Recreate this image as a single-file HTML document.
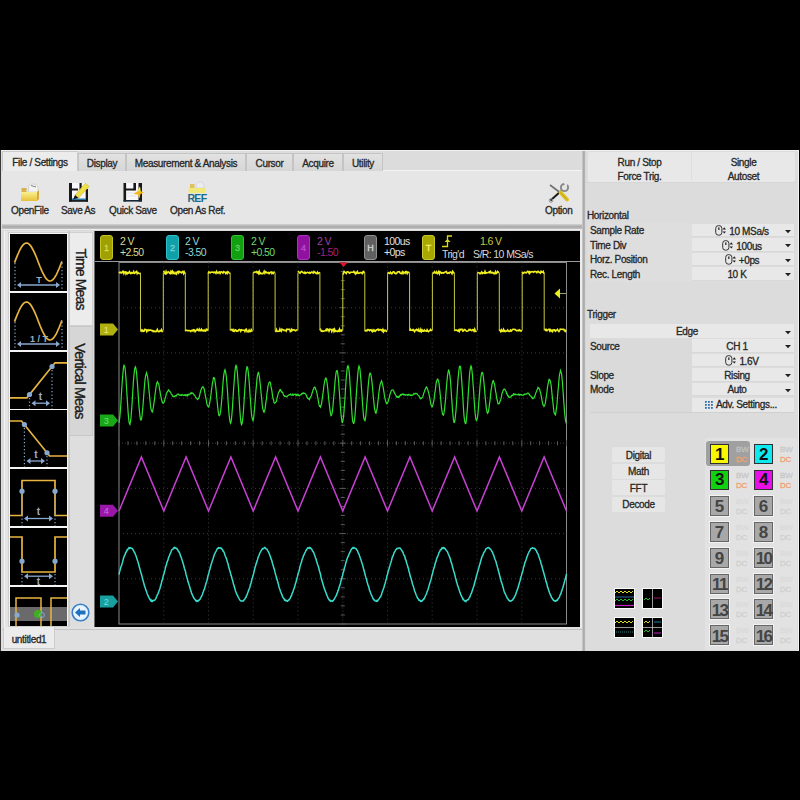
<!DOCTYPE html>
<html><head><meta charset="utf-8">
<style>
*{margin:0;padding:0;box-sizing:border-box}
html,body{width:800px;height:800px;background:#000;overflow:hidden}
body{position:relative;font-family:"Liberation Sans",sans-serif;font-size:10px;letter-spacing:-0.35px;color:#262626;-webkit-text-stroke:0.3px currentColor}
.a{position:absolute}
.t{position:absolute;white-space:nowrap;line-height:12px;padding-top:1px}
#app{position:absolute;left:1px;top:150px;width:798px;height:501px;background:#dedede;border-top:1px solid #f0f0f0}
.tab{position:absolute;top:153px;height:18px;padding-top:1px;background:linear-gradient(#e2e2e2,#d6d6d6);border:1px solid #c4c4c4;border-bottom:none;text-align:center;line-height:17px}
.btn{position:absolute;text-align:center;line-height:14px}
.lbl{position:absolute;white-space:nowrap}
</style></head><body>
<div id="app"></div>
<!-- tab strip -->
<div class="a" style="left:2px;top:151px;width:580px;height:20px;background:#dcdcdc"></div>
<div class="a" style="left:2px;top:170px;width:580px;height:1px;background:#f4f4f4"></div>
<div class="tab" style="left:78px;width:48px">Display</div>
<div class="tab" style="left:126px;width:120px">Measurement &amp; Analysis</div>
<div class="tab" style="left:246px;width:47px">Cursor</div>
<div class="tab" style="left:293px;width:50px">Acquire</div>
<div class="tab" style="left:343px;width:40px">Utility</div>
<div class="a" style="left:2px;top:151px;width:76px;height:21px;background:#ececec;border:1px solid #cacaca;border-bottom:none"></div>
<div class="t" style="left:2px;top:156px;width:76px;text-align:center">File / Settings</div>
<!-- toolbar -->
<div class="a" style="left:2px;top:171px;width:580px;height:54px;background:#e6e6e6"></div>
<div class="a" style="left:2px;top:224px;width:580px;height:5px;background:linear-gradient(#d4d4d4,#a8a8a8 55%,#c4c4c4)"></div>
<div class="a" style="left:2px;top:229px;width:580px;height:1px;background:#ececec"></div>
<div class="t" style="left:11px;top:204px">OpenFile</div>
<div class="t" style="left:61px;top:204px">Save As</div>
<div class="t" style="left:109px;top:204px">Quick Save</div>
<div class="t" style="left:170px;top:204px">Open As Ref.</div>
<div class="t" style="left:545px;top:204px">Option</div>
<svg class="a" style="left:16px;top:178px" width="30" height="28" viewBox="0 0 30 28">
<defs><linearGradient id="fg" x1="0" y1="0" x2="0" y2="1"><stop offset="0" stop-color="#f8f090"/><stop offset="1" stop-color="#e8c038"/></linearGradient></defs>
<rect x="5.5" y="10" width="5" height="4" fill="#d8b048"/>
<path d="M12.5,8 Q14,5.5 18,6 Q21,6.5 22,9 V14 H12.5 Z" fill="#f4f4f4" stroke="#c8c8c8" stroke-width="0.7"/>
<path d="M15,7.5 L20,9" stroke="#808080" stroke-width="1"/>
<rect x="5" y="14" width="16" height="9" fill="url(#fg)"/>
<path d="M21,14 L23,12 V21 L21,23 Z" fill="#d8a840"/>
</svg>
<svg class="a" style="left:64px;top:178px" width="30" height="28" viewBox="0 0 30 28">
<rect x="6" y="5" width="17" height="18" fill="#f8f8fc"/>
<rect x="5" y="5" width="3" height="18.5" fill="#181818"/>
<rect x="8" y="10.5" width="6" height="2" fill="#181818"/>
<rect x="15.5" y="5" width="2.2" height="7" fill="#181818"/>
<rect x="21.7" y="11" width="2.3" height="12.5" fill="#181818"/>
<rect x="5" y="22" width="19" height="1.8" fill="#181818"/>
<rect x="8" y="20.5" width="14" height="1.6" fill="#2878a8"/>
<path d="M11,17 L21.5,5 L25,8.5 L14.5,20 Z" fill="#f0e048" stroke="#c8b030" stroke-width="0.6"/>
<path d="M11,17 L9,21.5 L14.5,20 Z" fill="#181818"/>
</svg>
<svg class="a" style="left:118px;top:178px" width="30" height="28" viewBox="0 0 30 28">
<rect x="6" y="5" width="18" height="18" fill="#f8f8fc"/>
<rect x="5.5" y="5" width="2.6" height="18.5" fill="#181818"/>
<rect x="8" y="10.5" width="8" height="2" fill="#181818"/>
<rect x="15.4" y="5" width="2.6" height="7.5" fill="#181818"/>
<rect x="20.5" y="5" width="3.5" height="18.5" fill="#181818"/>
<rect x="5.5" y="22" width="18.5" height="1.6" fill="#182838"/>
<path d="M9,15 H18 M9,18 H18" stroke="#e0e0f0" stroke-width="1"/>
<path d="M22,8.5 L22.5,13 L26,14.5 L22.5,16 L21.5,20.5 L19.5,16.5 L15.5,16 L19,13.5 Z" fill="#f4b820"/>
<path d="M22,8.5 L22.5,13 L19,13.5 Z" fill="#d8f060"/>
</svg>
<svg class="a" style="left:182px;top:176px" width="30" height="30" viewBox="0 0 30 30">
<rect x="8" y="8" width="4.5" height="4.5" fill="#e0c060"/>
<path d="M14,9 Q16,5 20,6 L22,9 V12 H14 Z" fill="#ececf4" stroke="#c8c8d0" stroke-width="0.6"/>
<rect x="6.5" y="12" width="17" height="5" fill="#f0e878"/>
<text x="15" y="26.3" font-size="10.5" font-weight="bold" fill="#1d6a88" text-anchor="middle" font-family="Liberation Sans" letter-spacing="-0.6">REF</text>
</svg>
<svg class="a" style="left:544px;top:178px" width="30" height="28" viewBox="0 0 30 28">
<path d="M6,7 L16,14.5" stroke="#707070" stroke-width="1.6"/>
<path d="M6.5,22.5 L17,13" stroke="#1a1a1a" stroke-width="2"/>
<circle cx="7" cy="22.5" r="1.8" fill="none" stroke="#909090" stroke-width="1"/>
<path d="M16.5,14.5 L23,21.5" stroke="#e0c020" stroke-width="4" stroke-linecap="round"/>
<path d="M16.5,14.5 L23,21.5" stroke="#a09020" stroke-width="0.6"/>
<circle cx="20.5" cy="9.5" r="3.6" fill="none" stroke="#8a8a8a" stroke-width="2"/>
<path d="M20,5 L24,5 L22,10 Z" fill="#e6e6e6"/>
</svg>
<!-- left content bg -->
<div class="a" style="left:2px;top:230px;width:580px;height:398px;background:#dadada"></div>
<svg width="486" height="396" viewBox="0 0 486 396" style="position:absolute;left:94px;top:231px">
<rect width="486" height="396" fill="#000"/>
<style>.gd{stroke:#3a3a3a;stroke-width:1;stroke-dasharray:1 3} .gc{stroke:#3a3a3a;stroke-width:1;stroke-dasharray:1 2} .gt{stroke:#5a5a5a;stroke-width:1}</style>
<line x1="0" y1="30.5" x2="486" y2="30.5" stroke="#9a9a9a" stroke-width="1"/><line x1="0.5" y1="0" x2="0.5" y2="396" stroke="#6a6a6a" stroke-width="1"/>
<rect x="25" y="31.5" width="447.5" height="361.5" fill="none" stroke="#8a8a8a" stroke-width="1"/>
<line x1="69.8" y1="31.5" x2="69.8" y2="393" class="gd"/>
<line x1="114.5" y1="31.5" x2="114.5" y2="393" class="gd"/>
<line x1="159.2" y1="31.5" x2="159.2" y2="393" class="gd"/>
<line x1="204" y1="31.5" x2="204" y2="393" class="gd"/>
<line x1="293.5" y1="31.5" x2="293.5" y2="393" class="gd"/>
<line x1="338.2" y1="31.5" x2="338.2" y2="393" class="gd"/>
<line x1="383" y1="31.5" x2="383" y2="393" class="gd"/>
<line x1="427.8" y1="31.5" x2="427.8" y2="393" class="gd"/>
<line x1="25" y1="76.7" x2="472.5" y2="76.7" class="gd"/>
<line x1="25" y1="121.9" x2="472.5" y2="121.9" class="gd"/>
<line x1="25" y1="167.1" x2="472.5" y2="167.1" class="gd"/>
<line x1="25" y1="257.4" x2="472.5" y2="257.4" class="gd"/>
<line x1="25" y1="302.6" x2="472.5" y2="302.6" class="gd"/>
<line x1="25" y1="347.8" x2="472.5" y2="347.8" class="gd"/>
<line x1="248.8" y1="31.5" x2="248.8" y2="393" class="gc"/>
<line x1="25" y1="212.2" x2="472.5" y2="212.2" class="gc"/>
<line x1="25" y1="209.2" x2="25" y2="215.2" class="gt"/>
<line x1="34" y1="210.2" x2="34" y2="214.2" class="gt"/>
<line x1="42.9" y1="210.2" x2="42.9" y2="214.2" class="gt"/>
<line x1="51.8" y1="210.2" x2="51.8" y2="214.2" class="gt"/>
<line x1="60.8" y1="210.2" x2="60.8" y2="214.2" class="gt"/>
<line x1="69.8" y1="209.2" x2="69.8" y2="215.2" class="gt"/>
<line x1="78.7" y1="210.2" x2="78.7" y2="214.2" class="gt"/>
<line x1="87.7" y1="210.2" x2="87.7" y2="214.2" class="gt"/>
<line x1="96.6" y1="210.2" x2="96.6" y2="214.2" class="gt"/>
<line x1="105.6" y1="210.2" x2="105.6" y2="214.2" class="gt"/>
<line x1="114.5" y1="209.2" x2="114.5" y2="215.2" class="gt"/>
<line x1="123.4" y1="210.2" x2="123.4" y2="214.2" class="gt"/>
<line x1="132.4" y1="210.2" x2="132.4" y2="214.2" class="gt"/>
<line x1="141.3" y1="210.2" x2="141.3" y2="214.2" class="gt"/>
<line x1="150.3" y1="210.2" x2="150.3" y2="214.2" class="gt"/>
<line x1="159.2" y1="209.2" x2="159.2" y2="215.2" class="gt"/>
<line x1="168.2" y1="210.2" x2="168.2" y2="214.2" class="gt"/>
<line x1="177.1" y1="210.2" x2="177.1" y2="214.2" class="gt"/>
<line x1="186.1" y1="210.2" x2="186.1" y2="214.2" class="gt"/>
<line x1="195.1" y1="210.2" x2="195.1" y2="214.2" class="gt"/>
<line x1="204" y1="209.2" x2="204" y2="215.2" class="gt"/>
<line x1="212.9" y1="210.2" x2="212.9" y2="214.2" class="gt"/>
<line x1="221.9" y1="210.2" x2="221.9" y2="214.2" class="gt"/>
<line x1="230.9" y1="210.2" x2="230.9" y2="214.2" class="gt"/>
<line x1="239.8" y1="210.2" x2="239.8" y2="214.2" class="gt"/>
<line x1="248.8" y1="209.2" x2="248.8" y2="215.2" class="gt"/>
<line x1="257.7" y1="210.2" x2="257.7" y2="214.2" class="gt"/>
<line x1="266.6" y1="210.2" x2="266.6" y2="214.2" class="gt"/>
<line x1="275.6" y1="210.2" x2="275.6" y2="214.2" class="gt"/>
<line x1="284.6" y1="210.2" x2="284.6" y2="214.2" class="gt"/>
<line x1="293.5" y1="209.2" x2="293.5" y2="215.2" class="gt"/>
<line x1="302.4" y1="210.2" x2="302.4" y2="214.2" class="gt"/>
<line x1="311.4" y1="210.2" x2="311.4" y2="214.2" class="gt"/>
<line x1="320.4" y1="210.2" x2="320.4" y2="214.2" class="gt"/>
<line x1="329.3" y1="210.2" x2="329.3" y2="214.2" class="gt"/>
<line x1="338.2" y1="209.2" x2="338.2" y2="215.2" class="gt"/>
<line x1="347.2" y1="210.2" x2="347.2" y2="214.2" class="gt"/>
<line x1="356.1" y1="210.2" x2="356.1" y2="214.2" class="gt"/>
<line x1="365.1" y1="210.2" x2="365.1" y2="214.2" class="gt"/>
<line x1="374.1" y1="210.2" x2="374.1" y2="214.2" class="gt"/>
<line x1="383" y1="209.2" x2="383" y2="215.2" class="gt"/>
<line x1="391.9" y1="210.2" x2="391.9" y2="214.2" class="gt"/>
<line x1="400.9" y1="210.2" x2="400.9" y2="214.2" class="gt"/>
<line x1="409.9" y1="210.2" x2="409.9" y2="214.2" class="gt"/>
<line x1="418.8" y1="210.2" x2="418.8" y2="214.2" class="gt"/>
<line x1="427.8" y1="209.2" x2="427.8" y2="215.2" class="gt"/>
<line x1="436.7" y1="210.2" x2="436.7" y2="214.2" class="gt"/>
<line x1="445.6" y1="210.2" x2="445.6" y2="214.2" class="gt"/>
<line x1="454.6" y1="210.2" x2="454.6" y2="214.2" class="gt"/>
<line x1="463.5" y1="210.2" x2="463.5" y2="214.2" class="gt"/>
<line x1="472.5" y1="209.2" x2="472.5" y2="215.2" class="gt"/>
<line x1="245.8" y1="31.5" x2="251.8" y2="31.5" class="gt"/>
<line x1="246.8" y1="40.5" x2="250.8" y2="40.5" class="gt"/>
<line x1="246.8" y1="49.6" x2="250.8" y2="49.6" class="gt"/>
<line x1="246.8" y1="58.6" x2="250.8" y2="58.6" class="gt"/>
<line x1="246.8" y1="67.6" x2="250.8" y2="67.6" class="gt"/>
<line x1="245.8" y1="76.7" x2="251.8" y2="76.7" class="gt"/>
<line x1="246.8" y1="85.7" x2="250.8" y2="85.7" class="gt"/>
<line x1="246.8" y1="94.8" x2="250.8" y2="94.8" class="gt"/>
<line x1="246.8" y1="103.8" x2="250.8" y2="103.8" class="gt"/>
<line x1="246.8" y1="112.8" x2="250.8" y2="112.8" class="gt"/>
<line x1="245.8" y1="121.9" x2="251.8" y2="121.9" class="gt"/>
<line x1="246.8" y1="130.9" x2="250.8" y2="130.9" class="gt"/>
<line x1="246.8" y1="139.9" x2="250.8" y2="139.9" class="gt"/>
<line x1="246.8" y1="149" x2="250.8" y2="149" class="gt"/>
<line x1="246.8" y1="158" x2="250.8" y2="158" class="gt"/>
<line x1="245.8" y1="167.1" x2="251.8" y2="167.1" class="gt"/>
<line x1="246.8" y1="176.1" x2="250.8" y2="176.1" class="gt"/>
<line x1="246.8" y1="185.1" x2="250.8" y2="185.1" class="gt"/>
<line x1="246.8" y1="194.2" x2="250.8" y2="194.2" class="gt"/>
<line x1="246.8" y1="203.2" x2="250.8" y2="203.2" class="gt"/>
<line x1="245.8" y1="212.2" x2="251.8" y2="212.2" class="gt"/>
<line x1="246.8" y1="221.3" x2="250.8" y2="221.3" class="gt"/>
<line x1="246.8" y1="230.3" x2="250.8" y2="230.3" class="gt"/>
<line x1="246.8" y1="239.4" x2="250.8" y2="239.4" class="gt"/>
<line x1="246.8" y1="248.4" x2="250.8" y2="248.4" class="gt"/>
<line x1="245.8" y1="257.4" x2="251.8" y2="257.4" class="gt"/>
<line x1="246.8" y1="266.5" x2="250.8" y2="266.5" class="gt"/>
<line x1="246.8" y1="275.5" x2="250.8" y2="275.5" class="gt"/>
<line x1="246.8" y1="284.5" x2="250.8" y2="284.5" class="gt"/>
<line x1="246.8" y1="293.6" x2="250.8" y2="293.6" class="gt"/>
<line x1="245.8" y1="302.6" x2="251.8" y2="302.6" class="gt"/>
<line x1="246.8" y1="311.7" x2="250.8" y2="311.7" class="gt"/>
<line x1="246.8" y1="320.7" x2="250.8" y2="320.7" class="gt"/>
<line x1="246.8" y1="329.7" x2="250.8" y2="329.7" class="gt"/>
<line x1="246.8" y1="338.8" x2="250.8" y2="338.8" class="gt"/>
<line x1="245.8" y1="347.8" x2="251.8" y2="347.8" class="gt"/>
<line x1="246.8" y1="356.8" x2="250.8" y2="356.8" class="gt"/>
<line x1="246.8" y1="365.9" x2="250.8" y2="365.9" class="gt"/>
<line x1="246.8" y1="374.9" x2="250.8" y2="374.9" class="gt"/>
<line x1="246.8" y1="384" x2="250.8" y2="384" class="gt"/>
<line x1="245.8" y1="393" x2="251.8" y2="393" class="gt"/>
<path d="M25,40.9 L25.7,41.7 L26.4,41.3 L27.1,41.9 L27.8,41.9 L28.5,40.5 L29.2,40.3 L29.9,42.5 L30.6,41 L31.3,40.9 L32,42.9 L32.7,41.5 L33.4,42.5 L34.1,41.5 L34.8,42 L35.5,40.7 L36.2,42 L36.9,42.6 L37.6,41.7 L38.3,42.2 L39,42 L39.7,40.5 L40.4,42.3 L41.1,41.8 L41.8,41.1 L42.5,40.4 L43.2,42.6 L43.9,41.5 L44.6,42.2 L45.3,42.6 L46,42.2 M46.5,100.5 L47.2,99.1 L47.9,100.2 L48.6,99.3 L49.3,100.5 L50,100.4 L50.7,98.4 L51.4,98.5 L52.1,98.7 L52.8,100.6 L53.5,99.2 L54.2,99.7 L54.9,98.9 L55.6,99.4 L56.3,99.1 L57,99 L57.7,99.6 L58.4,99.6 L59.1,100.5 L59.8,99.9 L60.5,100.5 L61.2,100.3 L61.9,100.7 L62.6,99.8 L63.3,98.5 L64,100.3 L64.7,100.6 L65.4,100.5 L66.1,99.6 L66.8,100 L67.5,98.6 L68.2,100.3 L68.9,99.6 M69.3,41 L70,40.5 L70.7,42.5 L71.4,42.9 L72.1,40.5 L72.8,42.4 L73.5,41.4 L74.2,40.7 L74.9,41.1 L75.6,42.3 L76.3,42.6 L77,40.4 L77.7,41.9 L78.4,40.4 L79.1,42.2 L79.8,41.2 L80.5,42.6 L81.2,42.8 L81.9,41.6 L82.6,42.9 L83.3,41.1 L84,40.5 L84.7,41.9 L85.4,40.4 L86.1,40.8 L86.8,41.4 L87.5,41.9 L88.2,40.7 L88.9,40.4 L89.6,42.6 L90.3,41.1 L91,42.8 M91.3,100.4 L92,99.1 L92.7,99.3 L93.4,99.5 L94.1,99.8 L94.8,99.6 L95.5,99.6 L96.2,99.7 L96.9,100.5 L97.6,99.4 L98.3,99.2 L99,100 L99.7,98.7 L100.4,98.9 L101.1,100.6 L101.8,99.5 L102.5,99.5 L103.2,98.1 L103.9,99.2 L104.6,99.6 L105.3,98.2 L106,99.7 L106.7,99.7 L107.4,98.3 L108.1,99.7 L108.8,99.3 L109.5,99.9 L110.2,99 L110.9,99.9 L111.6,100 L112.3,98.2 L113,98.3 L113.7,99.9 M114.2,42.8 L114.9,41 L115.6,41.5 L116.3,41.8 L117,41.1 L117.7,41.2 L118.4,41.1 L119.1,41.3 L119.8,41.8 L120.5,41.1 L121.2,41.3 L121.9,42.3 L122.6,40.4 L123.3,41.8 L124,42.2 L124.7,41.1 L125.4,40.9 L126.1,42.4 L126.8,40.9 L127.5,40.8 L128.2,41.4 L128.9,42.1 L129.6,40.6 L130.3,41.1 L131,41.2 L131.7,42.5 L132.4,41.4 L133.1,42.5 L133.8,40.7 L134.5,41.2 L135.2,42 L135.9,42.6 M136.2,99.3 L136.9,98.7 L137.6,98.4 L138.3,99.5 L139,98.6 L139.7,100.2 L140.4,100.3 L141.1,98.6 L141.8,98.8 L142.5,100.2 L143.2,99.8 L143.9,100.2 L144.6,99 L145.3,98.4 L146,98.9 L146.7,100.2 L147.4,98.8 L148.1,99 L148.8,99.2 L149.5,99.2 L150.2,99.2 L150.9,100.5 L151.6,98.5 L152.3,98.1 L153,100.6 L153.7,100.4 L154.4,100.7 L155.1,99.2 L155.8,100.6 L156.5,100.5 L157.2,98.7 L157.9,100 L158.6,100.3 M159.1,42 L159.8,41.6 L160.4,41.1 L161.1,41.2 L161.8,40.9 L162.5,40.5 L163.2,41.8 L163.9,41 L164.6,42.4 L165.3,40.4 L166,42.6 L166.7,42.1 L167.4,42.7 L168.1,42.6 L168.8,42.6 L169.5,41.8 L170.2,40.3 L170.9,42.2 L171.6,40.7 L172.3,41.1 L173,42 L173.7,41.7 L174.4,41.4 L175.1,42.7 L175.8,41.9 L176.5,41.2 L177.2,41 L177.9,42.5 L178.6,41.5 L179.3,42.3 L180,41.2 L180.7,40.8 M181.1,99.5 L181.8,100.2 L182.4,98.5 L183.1,100.2 L183.8,100.5 L184.5,100.2 L185.2,100.2 L185.9,98.1 L186.6,99.7 L187.3,100.3 L188,98.2 L188.7,98.8 L189.4,98.8 L190.1,99.5 L190.8,99.2 L191.5,99.3 L192.2,100.1 L192.9,98.1 L193.6,98.2 L194.3,98.4 L195,98.4 L195.7,98.3 L196.4,100.6 L197.1,100.3 L197.8,98.3 L198.5,99.4 L199.2,98.9 L199.9,98.9 L200.6,99 L201.3,99.8 L202,99.6 L202.7,99 L203.4,98.6 M203.9,41.2 L204.6,40.6 L205.3,41.7 L206,42.2 L206.7,41.3 L207.4,40.5 L208.1,40.8 L208.8,41.3 L209.5,41.9 L210.2,42.3 L210.9,41.3 L211.6,42.4 L212.3,41.9 L213,41.4 L213.7,41.3 L214.4,41.6 L215.1,42.1 L215.8,41.4 L216.5,42.1 L217.2,41.5 L217.9,40.9 L218.6,41.7 L219.3,42.1 L220,40.5 L220.7,41.4 L221.4,41.4 L222.1,42.6 L222.8,42.7 L223.5,41.3 L224.2,42.6 L224.9,42.4 L225.6,41 M225.9,99.3 L226.6,98.4 L227.3,100.2 L228,99.8 L228.7,100.4 L229.4,100.2 L230.1,99.8 L230.8,100 L231.5,99.6 L232.2,98.4 L232.9,99.6 L233.6,98.1 L234.3,98.5 L235,100.1 L235.7,98.2 L236.4,98.3 L237.1,98.4 L237.8,100.4 L238.5,98.6 L239.2,98.2 L239.9,100.3 L240.6,98.4 L241.3,100.3 L242,99.9 L242.7,100.3 L243.4,100.6 L244.1,99.6 L244.8,100.2 L245.5,98.2 L246.2,100.1 L246.9,99.4 L247.6,100 L248.3,98.4 M248.8,42.2 L249.4,42.7 L250.1,40.5 L250.8,41.1 L251.5,41.8 L252.2,42.5 L252.9,40.9 L253.6,40.8 L254.3,40.9 L255,41.9 L255.7,42.3 L256.4,41.3 L257.1,41.3 L257.8,41.3 L258.5,41.2 L259.2,41.4 L259.9,40.5 L260.6,41.6 L261.3,42.8 L262,41.4 L262.7,42.2 L263.4,40.7 L264.1,42.1 L264.8,42.3 L265.5,42.1 L266.2,41.6 L266.9,41.6 L267.6,42 L268.3,42.6 L269,40.7 L269.7,40.5 L270.4,42.2 M270.8,100.5 L271.4,99.4 L272.1,99.3 L272.8,100 L273.5,98.6 L274.2,98.8 L274.9,98.6 L275.6,99.6 L276.3,98.9 L277,98.7 L277.7,99.9 L278.4,100.6 L279.1,98.9 L279.8,99.9 L280.5,99.2 L281.2,100.3 L281.9,99.6 L282.6,98.8 L283.3,98.7 L284,98.2 L284.7,99.3 L285.4,99.1 L286.1,98.5 L286.8,99 L287.5,98.9 L288.2,100.1 L288.9,98.5 L289.6,100.7 L290.3,99.3 L291,99.7 L291.7,99.3 L292.4,100.3 L293.1,100.2 M293.6,41.7 L294.3,41.6 L295,42.2 L295.7,42.5 L296.4,41.3 L297.1,42.2 L297.8,42.8 L298.5,41.5 L299.2,40.9 L299.9,40.9 L300.6,42.2 L301.3,42.1 L302,42.8 L302.7,42.5 L303.4,40.9 L304.1,40.8 L304.8,41 L305.5,40.8 L306.2,42.1 L306.9,42.5 L307.6,42.6 L308.3,41 L309,42.5 L309.7,41.1 L310.4,41.4 L311.1,42.2 L311.8,40.5 L312.5,40.5 L313.2,42.5 L313.9,41.1 L314.6,41.2 L315.3,41.8 M315.6,99.9 L316.3,98.1 L317,99 L317.7,99.2 L318.4,99.4 L319.1,98.6 L319.8,99.6 L320.5,100.6 L321.2,99.1 L321.9,99.5 L322.6,98.4 L323.3,98.8 L324,99.8 L324.7,98.4 L325.4,100.4 L326.1,100.5 L326.8,98.4 L327.5,100.5 L328.2,99.1 L328.9,100.1 L329.6,100.1 L330.3,98.9 L331,99.9 L331.7,99.8 L332.4,100.2 L333.1,98.8 L333.8,100.1 L334.5,100.6 L335.2,99.8 L335.9,99.5 L336.6,98.4 L337.3,99.4 L338,99 M338.4,42.2 L339.1,42.1 L339.8,41.8 L340.5,40.8 L341.2,42 L341.9,41.9 L342.6,40.8 L343.3,42.6 L344,42 L344.7,40.6 L345.4,42.7 L346.1,40.7 L346.8,41.2 L347.5,42.2 L348.2,41.9 L348.9,41.7 L349.6,42 L350.3,41.5 L351,41.1 L351.7,40.8 L352.4,40.5 L353.1,42.2 L353.8,42.3 L354.5,41.7 L355.2,42.2 L355.9,41.2 L356.6,41 L357.3,41.3 L358,42.6 L358.7,40.4 L359.4,41.6 L360.1,40.9 M360.4,100.1 L361.1,99 L361.8,99 L362.5,99.1 L363.2,99.5 L363.9,100.1 L364.6,99 L365.3,100.3 L366,98.4 L366.7,98.8 L367.4,98.4 L368.1,98.4 L368.8,100.1 L369.5,100 L370.2,98.6 L370.9,98.6 L371.6,99.2 L372.3,100 L373,100.2 L373.7,100 L374.4,99.6 L375.1,98.5 L375.8,99.1 L376.5,98.6 L377.2,99.5 L377.9,99.6 L378.6,98.6 L379.3,98.8 L380,100.1 L380.7,98.2 L381.4,100.2 L382.1,100.4 L382.8,100.6 M383.3,41.3 L384,41.7 L384.7,41.8 L385.4,41.9 L386.1,42.8 L386.8,42.1 L387.5,41.1 L388.2,42.5 L388.9,41.6 L389.6,41.9 L390.3,42.2 L391,40.3 L391.7,42.3 L392.4,42 L393.1,41.6 L393.8,41.7 L394.5,41.5 L395.2,40.8 L395.9,41.7 L396.6,40.4 L397.3,41.6 L398,42 L398.7,41.5 L399.4,41.8 L400.1,42.8 L400.8,42.6 L401.5,40.7 L402.2,42.4 L402.9,41.9 L403.6,40.4 L404.3,41.2 L405,40.9 M405.3,98.3 L406,99.5 L406.7,100.5 L407.4,98.9 L408.1,100.4 L408.8,99.9 L409.5,98.4 L410.2,100.3 L410.9,99.7 L411.6,100.5 L412.3,100 L413,100 L413.7,99 L414.4,100.2 L415.1,100.5 L415.8,100.3 L416.5,99.2 L417.2,100.1 L417.9,99.4 L418.6,98.4 L419.3,98.2 L420,98.3 L420.7,98.6 L421.4,98.5 L422.1,99.4 L422.8,99.9 L423.5,99.5 L424.2,99.2 L424.9,99.8 L425.6,98.9 L426.3,99.3 L427,100.1 L427.7,99.1 M428.2,40.8 L428.9,42.6 L429.6,42.2 L430.3,41.3 L431,41.3 L431.7,41.7 L432.4,41.9 L433.1,40.9 L433.8,40.3 L434.5,40.8 L435.2,42.3 L435.9,40.7 L436.6,41.5 L437.3,40.8 L438,40.8 L438.7,40.7 L439.4,41.3 L440.1,40.7 L440.8,40.4 L441.5,40.6 L442.2,40.7 L442.9,41.6 L443.6,40.5 L444.3,40.4 L445,41.5 L445.7,41.4 L446.4,42.1 L447.1,40.4 L447.8,41.3 L448.5,41.3 L449.2,40.4 L449.9,42.8 M450.2,98.7 L450.9,98.3 L451.6,99.3 L452.3,98.5 L453,99.7 L453.7,99 L454.4,98.4 L455.1,98.2 L455.8,100 L456.5,98.8 L457.2,100.1 L457.9,99.3 L458.6,100.5 L459.3,98.9 L460,98.7 L460.7,98.8 L461.4,100.2 L462.1,99.7 L462.8,99 L463.5,98.3 L464.2,99.9 L464.9,100.6 L465.6,99.6 L466.3,98.1 L467,98.2 L467.7,98.3 L468.4,98.5 L469.1,98.2 L469.8,98.2 L470.5,99.8 L471.2,100.4 L471.9,98.6" fill="none" stroke="#f0f020" stroke-width="1.6"/><path d="M46.5,41.6 L46.5,99.4 M69.3,99.4 L69.3,41.6 M91.3,41.6 L91.3,99.4 M114.2,99.4 L114.2,41.6 M136.2,41.6 L136.2,99.4 M159.1,99.4 L159.1,41.6 M181.1,41.6 L181.1,99.4 M203.9,99.4 L203.9,41.6 M225.9,41.6 L225.9,99.4 M248.8,99.4 L248.8,41.6 M270.8,41.6 L270.8,99.4 M293.6,99.4 L293.6,41.6 M315.6,41.6 L315.6,99.4 M338.4,99.4 L338.4,41.6 M360.4,41.6 L360.4,99.4 M383.3,99.4 L383.3,41.6 M405.3,41.6 L405.3,99.4 M428.2,99.4 L428.2,41.6 M450.2,41.6 L450.2,99.4" fill="none" stroke="#c8c840" stroke-width="1"/>
<path d="M25,191.9 L25.5,188.6 L26,184.4 L26.5,178.3 L27,170.9 L27.5,161.6 L28,154 L28.5,147.1 L29,141.6 L29.5,136.2 L30,134.4 L30.5,135.3 L31,136.8 L31.5,141.7 L32,147.9 L32.5,155.9 L33,164.5 L33.5,171.6 L34,179.9 L34.5,186.1 L35,190.8 L35.5,192.8 L36,193.5 L36.5,190.5 L37,186.4 L37.5,180.1 L38,173.6 L38.5,165.2 L39,157 L39.5,149.4 L40,144 L40.5,139.2 L41,136.8 L41.5,135.9 L42,137.8 L42.5,141.1 L43,147.3 L43.5,153 L44,161 L44.5,168.8 L45,175.6 L45.5,180.7 L46,185.3 L46.5,188.7 L47,189.1 L47.5,188.1 L48,184.9 L48.5,179.6 L49,174.5 L49.5,167.8 L50,160.7 L50.5,154.6 L51,148.9 L51.5,145.4 L52,143.8 L52.5,141.8 L53,143.4 L53.5,145.3 L54,149.1 L54.5,154.6 L55,159.4 L55.5,164.5 L56,169.8 L56.5,174.9 L57,178.1 L57.5,179.4 L58,180.5 L58.5,180.9 L59,178 L59.5,175.5 L60,171.7 L60.5,168.1 L61,163.7 L61.5,160 L62,156.3 L62.5,153.2 L63,151.5 L63.5,150.7 L64,152.2 L64.5,152.5 L65,154.4 L65.5,158.3 L66,160.1 L66.5,164 L67,165.6 L67.5,168.5 L68,170 L68.5,171.9 L69,172.1 L69.5,171.9 L70,171.2 L70.5,170.1 L71,167.7 L71.5,166.3 L72,164.3 L72.5,162.1 L73,161.7 L73.5,160.4 L74,160 L74.5,158.9 L75,159.6 L75.5,159.9 L76,161 L76.5,161 L77,162.3 L77.5,163.4 L78,163.6 L78.5,164.9 L79,165.6 L79.5,165.4 L80,165.8 L80.5,165.6 L81,164.8 L81.5,164.7 L82,165.3 L82.5,164 L83,163.9 L83.5,163.2 L84,163.2 L84.5,163.1 L85,164.1 L85.5,163.9 L86,164.1 L86.5,164.3 L87,163.9 L87.5,164.4 L88,163.8 L88.5,163.7 L89,164.4 L89.5,164.4 L90,164.4 L90.5,163.8 L91,164.3 L91.5,163.8 L92,164.7 L92.5,164.6 L93,163.8 L93.5,164.7 L94,163.5 L94.5,163.2 L95,163.9 L95.5,163 L96,163 L96.5,162.9 L97,161.7 L97.5,162.5 L98,161.8 L98.5,162.1 L99,162.3 L99.5,163.3 L100,164 L100.5,164.1 L101,164.8 L101.5,165.9 L102,166.9 L102.5,167.1 L103,167.6 L103.5,168.5 L104,168.1 L104.5,167.7 L105,166.6 L105.5,165 L106,162.6 L106.5,160.5 L107,159 L107.5,157.7 L108,156.6 L108.5,155.9 L109,155.6 L109.5,156.9 L110,157.4 L110.5,159.6 L111,162.6 L111.5,165.3 L112,167.5 L112.5,170.3 L113,173.5 L113.5,174.2 L114,175.5 L114.5,176.1 L115,175.3 L115.5,172.9 L116,169.9 L116.5,166.6 L117,163.4 L117.5,158.8 L118,155.5 L118.5,151.8 L119,149.4 L119.5,146.5 L120,146.5 L120.5,147.3 L121,150.3 L121.5,153.8 L122,158 L122.5,163.9 L123,168.7 L123.5,174.2 L124,178.6 L124.5,182.9 L125,184.5 L125.5,184.7 L126,183.3 L126.5,181 L127,176.9 L127.5,171.5 L128,165.6 L128.5,158.9 L129,151.8 L129.5,146.1 L130,142.7 L130.5,140 L131,138.8 L131.5,140.4 L132,143.1 L132.5,147.5 L133,153.5 L133.5,160.4 L134,168.7 L134.5,176.3 L135,182.7 L135.5,187.1 L136,190.6 L136.5,192.2 L137,191 L137.5,187.6 L138,182.3 L138.5,175.9 L139,167.8 L139.5,159.8 L140,152.7 L140.5,146.1 L141,139.9 L141.5,136 L142,134.4 L142.5,135.2 L143,138.7 L143.5,143.2 L144,150.6 L144.5,157.2 L145,165.7 L145.5,174 L146,181.1 L146.5,187.6 L147,191.6 L147.5,193.7 L148,192.8 L148.5,189.3 L149,185.3 L149.5,178.9 L150,171.3 L150.5,162.9 L151,155.6 L151.5,148.7 L152,141.7 L152.5,138.3 L153,135.8 L153.5,136.1 L154,138.9 L154.5,143.3 L155,148.7 L155.5,155 L156,163.5 L156.5,169.9 L157,176.9 L157.5,183.2 L158,186.5 L158.5,188.6 L159,189.7 L159.5,187.8 L160,183.3 L160.5,178.4 L161,172.1 L161.5,165.3 L162,158.9 L162.5,153.9 L163,147.6 L163.5,144.1 L164,142 L164.5,141.5 L165,143.5 L165.5,146.7 L166,151 L166.5,155.7 L167,161.5 L167.5,165.9 L168,171.3 L168.5,176.5 L169,178.4 L169.5,180.5 L170,181.2 L170.5,180 L171,178.2 L171.5,174.3 L172,170.6 L172.5,167.4 L173,162 L173.5,159.1 L174,154.8 L174.5,153.4 L175,151.5 L175.5,151.1 L176,151 L176.5,152.4 L177,155.7 L177.5,157.7 L178,160.7 L178.5,164.6 L179,167.5 L179.5,168.7 L180,171.7 L180.5,172.1 L181,172.2 L181.5,171.4 L182,170.8 L182.5,170.2 L183,167.4 L183.5,165.3 L184,163.4 L184.5,161.7 L185,160.6 L185.5,160.4 L186,158.6 L186.5,158.6 L187,159.9 L187.5,160.6 L188,161.4 L188.5,161.3 L189,162.4 L189.5,164.2 L190,164.4 L190.5,165.3 L191,165.2 L191.5,165 L192,165.5 L192.5,165.9 L193,165.7 L193.5,165.1 L194,164.5 L194.5,164.3 L195,163.8 L195.5,163.7 L196,164 L196.5,163 L197,163.6 L197.5,164.1 L198,164 L198.5,163.2 L199,164.3 L199.5,164.2 L200,163.3 L200.5,163.5 L201,163.4 L201.5,163.2 L202,164.5 L202.5,163.7 L203,164.4 L203.5,163.4 L204,163.3 L204.5,164.5 L205,164.4 L205.5,164.7 L206,164.2 L206.5,163.8 L207,163.9 L207.5,162.7 L208,163.1 L208.5,162.7 L209,162 L209.5,162.5 L210,162 L210.5,162.4 L211,162.5 L211.5,162.9 L212,163.6 L212.5,164.7 L213,166.1 L213.5,166.8 L214,167.5 L214.5,168 L215,167.5 L215.5,168.5 L216,167.1 L216.5,166.1 L217,165.5 L217.5,164.4 L218,162.2 L218.5,161 L219,158.8 L219.5,158.4 L220,156.6 L220.5,156.1 L221,156.3 L221.5,157.5 L222,159.1 L222.5,160.4 L223,162.7 L223.5,165.7 L224,167.7 L224.5,170.9 L225,173.7 L225.5,175.3 L226,175.1 L226.5,176.1 L227,174.3 L227.5,173.1 L228,169.3 L228.5,165.6 L229,162.1 L229.5,158.5 L230,154.1 L230.5,151.5 L231,148.9 L231.5,147.2 L232,147.2 L232.5,148.9 L233,151.4 L233.5,155.1 L234,160.2 L234.5,165.7 L235,170.6 L235.5,174.9 L236,179.2 L236.5,182.6 L237,184.6 L237.5,184.1 L238,182.4 L238.5,179.6 L239,175 L239.5,169 L240,163.4 L240.5,157.5 L241,150.9 L241.5,146 L242,142.2 L242.5,140 L243,139.7 L243.5,140.7 L244,144.5 L244.5,148.9 L245,156.3 L245.5,162.8 L246,170.3 L246.5,177.8 L247,183 L247.5,187.5 L248,191.1 L248.5,191.5 L249,189.2 L249.5,185.6 L250,180.6 L250.5,173.3 L251,166.7 L251.5,157.8 L252,150.3 L252.5,143.8 L253,138.8 L253.5,135.5 L254,134.8 L254.5,136.1 L255,139.3 L255.5,144.3 L256,152.5 L256.5,160 L257,167.4 L257.5,175.8 L258,183.2 L258.5,189 L259,191.3 L259.5,192.5 L260,192.2 L260.5,188.9 L261,184.3 L261.5,177.5 L262,169.1 L262.5,161.1 L263,153.5 L263.5,146.9 L264,140.5 L264.5,137 L265,135.1 L265.5,136.5 L266,138.4 L266.5,144.4 L267,150.1 L267.5,157.3 L268,164.2 L268.5,171.8 L269,178.7 L269.5,184.6 L270,187.8 L270.5,189.1 L271,189.7 L271.5,187 L272,182.7 L272.5,176.9 L273,170.6 L273.5,164.7 L274,157.1 L274.5,151.7 L275,147 L275.5,143.3 L276,142.2 L276.5,142.5 L277,144.2 L277.5,147.3 L278,151.1 L278.5,156.2 L279,162.3 L279.5,167.7 L280,172.5 L280.5,177.6 L281,179.6 L281.5,181.9 L282,182.2 L282.5,179.7 L283,178.3 L283.5,174.1 L284,169.7 L284.5,165.3 L285,160.7 L285.5,157.4 L286,154.1 L286.5,152.4 L287,151.1 L287.5,149.9 L288,151.3 L288.5,153.1 L289,155.3 L289.5,158.3 L290,161.5 L290.5,165.2 L291,167.5 L291.5,169.5 L292,171.3 L292.5,172.5 L293,172.8 L293.5,171.8 L294,171.2 L294.5,168.9 L295,167.6 L295.5,165.5 L296,163 L296.5,162.1 L297,160.2 L297.5,159.4 L298,159 L298.5,158.9 L299,159 L299.5,159.2 L300,161.1 L300.5,162.2 L301,162.8 L301.5,163.9 L302,164.3 L302.5,165.9 L303,166 L303.5,165.6 L304,166.4 L304.5,166.4 L305,165.2 L305.5,165.7 L306,164.6 L306.5,163.7 L307,164.2 L307.5,163.4 L308,163.7 L308.5,163.5 L309,162.8 L309.5,163.4 L310,164 L310.5,163.5 L311,163.7 L311.5,164.2 L312,163.7 L312.5,163.8 L313,163.9 L313.5,164.3 L314,163.4 L314.5,163.2 L315,164.2 L315.5,163.9 L316,163.6 L316.5,164.5 L317,164.5 L317.5,164 L318,164.5 L318.5,164.2 L319,163.9 L319.5,163 L320,162.4 L320.5,163.1 L321,163 L321.5,162.3 L322,162.4 L322.5,162.7 L323,162.6 L323.5,163.6 L324,164.1 L324.5,164.5 L325,164.9 L325.5,166.3 L326,166.6 L326.5,167.7 L327,167.1 L327.5,167.3 L328,166.6 L328.5,166.1 L329,165.2 L329.5,163.1 L330,161.5 L330.5,160.5 L331,158.6 L331.5,157.8 L332,156.4 L332.5,156 L333,156.8 L333.5,158.2 L334,159.6 L334.5,161.1 L335,163.3 L335.5,165.5 L336,168.5 L336.5,171 L337,174 L337.5,174.2 L338,175.9 L338.5,175 L339,173.6 L339.5,171.2 L340,169.2 L340.5,164.5 L341,161.2 L341.5,157.2 L342,153.2 L342.5,150.3 L343,149.3 L343.5,148.1 L344,148.4 L344.5,150.3 L345,152.1 L345.5,156.9 L346,161.6 L346.5,166 L347,171.5 L347.5,176.9 L348,180 L348.5,183.3 L349,183.8 L349.5,184.2 L350,181.7 L350.5,178.6 L351,173.6 L351.5,168.6 L352,162.1 L352.5,155.5 L353,149.9 L353.5,144.7 L354,141.8 L354.5,139.2 L355,139.8 L355.5,141.9 L356,145.5 L356.5,150.4 L357,157.1 L357.5,165 L358,171.6 L358.5,179.1 L359,184.4 L359.5,189.2 L360,191.3 L360.5,191.3 L361,188.8 L361.5,184.2 L362,179.2 L362.5,172.4 L363,164.8 L363.5,155.9 L364,148.4 L364.5,143.3 L365,138.3 L365.5,135.2 L366,135.1 L366.5,136.2 L367,140.7 L367.5,146.7 L368,153.9 L368.5,161.3 L369,169.5 L369.5,177.9 L370,185 L370.5,188.9 L371,191.8 L371.5,192.6 L372,192.1 L372.5,187.8 L373,182.2 L373.5,175.9 L374,167.5 L374.5,158.9 L375,151.7 L375.5,144.1 L376,139.3 L376.5,136.7 L377,135 L377.5,136 L378,140 L378.5,144.9 L379,152.3 L379.5,158.5 L380,167.1 L380.5,173.9 L381,180.8 L381.5,185.3 L382,188.8 L382.5,189.6 L383,188.6 L383.5,186.1 L384,182.1 L384.5,175.7 L385,168.9 L385.5,162.4 L386,155.3 L386.5,149.9 L387,145.7 L387.5,142.6 L388,141.4 L388.5,141.5 L389,143.4 L389.5,147.1 L390,152.3 L390.5,157.6 L391,163.9 L391.5,169.1 L392,174.7 L392.5,178.4 L393,181.1 L393.5,182.4 L394,181.8 L394.5,180 L395,177 L395.5,172.9 L396,169.6 L396.5,164.6 L397,159.7 L397.5,156.9 L398,153.4 L398.5,151.3 L399,150 L399.5,149.7 L400,152.1 L400.5,153 L401,156 L401.5,160 L402,162.1 L402.5,165.8 L403,168.5 L403.5,170.4 L404,172.9 L404.5,172.9 L405,172.3 L405.5,172.2 L406,170.2 L406.5,169.4 L407,167.6 L407.5,165.5 L408,162.3 L408.5,161.4 L409,159.5 L409.5,158.8 L410,158.2 L410.5,158.2 L411,158.4 L411.5,159.9 L412,160.2 L412.5,162.5 L413,162.4 L413.5,164.7 L414,164.5 L414.5,165 L415,166.4 L415.5,166.2 L416,166.5 L416.5,165.9 L417,165.7 L417.5,164.5 L418,164.8 L418.5,164.2 L419,164.4 L419.5,162.8 L420,162.7 L420.5,163.5 L421,163.8 L421.5,163.2 L422,163.7 L422.5,163.6 L423,163.5 L423.5,163.7 L424,163.9 L424.5,163.1 L425,163.5 L425.5,164.1 L426,163.5 L426.5,163.8 L427,163.5 L427.5,163.6 L428,164.1 L428.5,164.2 L429,164.5 L429.5,163.9 L430,163.4 L430.5,163.5 L431,162.9 L431.5,163 L432,163.3 L432.5,163.1 L433,162.4 L433.5,162.2 L434,162.1 L434.5,162.3 L435,163.1 L435.5,163.2 L436,164.6 L436.5,164.9 L437,165.3 L437.5,166.1 L438,166.1 L438.5,167.5 L439,167.7 L439.5,167 L440,167 L440.5,165.5 L441,164.3 L441.5,163 L442,161.4 L442.5,160.5 L443,159.1 L443.5,158.1 L444,156.5 L444.5,157.3 L445,157.2 L445.5,158 L446,159.7 L446.5,161.6 L447,163.7 L447.5,166.6 L448,169.4 L448.5,171.8 L449,174 L449.5,174.1 L450,175.5 L450.5,174.8 L451,173.2 L451.5,171.3 L452,167.1 L452.5,164.4 L453,160.8 L453.5,156 L454,153.3 L454.5,151.1 L455,148.4 L455.5,148.6 L456,149.4 L456.5,150.6 L457,153.3 L457.5,157.5 L458,163 L458.5,167.5 L459,172.3 L459.5,177 L460,181.2 L460.5,182.7 L461,183.3 L461.5,183.9 L462,180.7 L462.5,177.1 L463,172.9 L463.5,166.2 L464,159.7 L464.5,154.7 L465,148.2 L465.5,143.7 L466,141.7 L466.5,139.4 L467,140.9 L467.5,142.6 L468,146.8 L468.5,152.3 L469,159.4 L469.5,166.6 L470,173.5 L470.5,180.1 L471,185.2 L471.5,189.6 L472,191.4 L472.5,190.8" fill="none" stroke="#30e030" stroke-width="1.2"/>
<path d="M25,280 L47.4,226 L69.8,280 L92.1,226 L114.5,280 L136.9,226 L159.2,280 L181.6,226 L204,280 L226.4,226 L248.8,280 L271.1,226 L293.5,280 L315.9,226 L338.2,280 L360.6,226 L383,280 L405.4,226 L427.8,280 L450.1,226 L472.5,280" fill="none" stroke="#c840d4" stroke-width="1.5"/>
<path d="M25,343.7 L25.5,341.1 L26,339.4 L26.5,337.5 L27,335.7 L27.5,334.7 L28,332.9 L28.5,331.3 L29,329.3 L29.5,327.3 L30,326.1 L30.5,324.4 L31,324 L31.5,322.1 L32,321.1 L32.5,320.7 L33,319.1 L33.5,319.1 L34,317.9 L34.5,317.7 L35,316.8 L35.5,317.3 L36,316.7 L36.5,316.7 L37,317.1 L37.5,317.3 L38,317.4 L38.5,317.8 L39,318.9 L39.5,319.2 L40,320.9 L40.5,321.4 L41,322.3 L41.5,323.7 L42,324.8 L42.5,326.4 L43,328.1 L43.5,329.5 L44,331.1 L44.5,332.7 L45,334.7 L45.5,336.8 L46,338.2 L46.5,340.4 L47,342 L47.5,343.5 L48,345.4 L48.5,347.9 L49,349.4 L49.5,351.1 L50,353 L50.5,355 L51,356.2 L51.5,357.8 L52,359.4 L52.5,360.4 L53,362.3 L53.5,363.5 L54,364.7 L54.5,365.7 L55,366.7 L55.5,367.8 L56,368 L56.5,369.4 L57,369 L57.5,370.1 L58,369.6 L58.5,370.3 L59,369.7 L59.5,369.3 L60,369.5 L60.5,369.4 L61,368.8 L61.5,368.1 L62,367.4 L62.5,365.6 L63,364.9 L63.5,363.5 L64,362.9 L64.5,361.2 L65,360.1 L65.5,358.6 L66,357.3 L66.5,355.3 L67,353.8 L67.5,351.7 L68,349.5 L68.5,348.4 L69,345.8 L69.5,343.9 L70,342.8 L70.5,340.4 L71,338.9 L71.5,336.5 L72,334.8 L72.5,333.6 L73,331.2 L73.5,330 L74,328.9 L74.5,326.7 L75,325.7 L75.5,324.4 L76,323.1 L76.5,322.1 L77,321 L77.5,319.4 L78,318.7 L78.5,318.4 L79,318.2 L79.5,317.1 L80,317.1 L80.5,316.5 L81,317.1 L81.5,316.8 L82,317.1 L82.5,317.6 L83,317.5 L83.5,318.7 L84,319.5 L84.5,320.4 L85,320.8 L85.5,321.8 L86,322.9 L86.5,324.9 L87,325.8 L87.5,327.2 L88,328.9 L88.5,330.6 L89,331.9 L89.5,333.7 L90,335.8 L90.5,337.7 L91,339 L91.5,340.6 L92,343.4 L92.5,345 L93,346.8 L93.5,348.4 L94,350.8 L94.5,352 L95,353.6 L95.5,355.1 L96,357 L96.5,358.8 L97,360.1 L97.5,362.1 L98,363.1 L98.5,364.1 L99,365.4 L99.5,366.4 L100,367.3 L100.5,367.9 L101,368.6 L101.5,369.1 L102,369.9 L102.5,369.5 L103,370.3 L103.5,369.8 L104,370.2 L104.5,369.2 L105,369.2 L105.5,368.7 L106,368.3 L106.5,367.1 L107,366.3 L107.5,365.2 L108,364.5 L108.5,363.3 L109,361.5 L109.5,360.3 L110,358.8 L110.5,358 L111,355.9 L111.5,354.3 L112,352.3 L112.5,350.9 L113,349.3 L113.5,347.3 L114,344.8 L114.5,343.3 L115,341.5 L115.5,339.2 L116,338.1 L116.5,335.8 L117,334 L117.5,332.6 L118,330.9 L118.5,329.2 L119,328 L119.5,326.2 L120,324.7 L120.5,323.1 L121,322.4 L121.5,321.1 L122,320.3 L122.5,319.3 L123,318.2 L123.5,317.6 L124,317.2 L124.5,316.8 L125,317.3 L125.5,316.9 L126,316.6 L126.5,317.2 L127,317.4 L127.5,317.2 L128,318.4 L128.5,318.6 L129,320.1 L129.5,320.2 L130,321.3 L130.5,322.4 L131,324.2 L131.5,325.5 L132,326.7 L132.5,327.7 L133,329.6 L133.5,331.5 L134,332.5 L134.5,335.1 L135,336.8 L135.5,338.7 L136,340.3 L136.5,342.1 L137,344.3 L137.5,345.5 L138,347.4 L138.5,349 L139,350.9 L139.5,353.3 L140,354.3 L140.5,356.6 L141,357.9 L141.5,359.9 L142,361.2 L142.5,362.5 L143,363.9 L143.5,364.3 L144,365.6 L144.5,366.6 L145,367.5 L145.5,368.5 L146,369.3 L146.5,369.6 L147,370.1 L147.5,370.1 L148,369.9 L148.5,370 L149,370 L149.5,369.8 L150,368.9 L150.5,368.3 L151,367.9 L151.5,366.7 L152,366.4 L152.5,364.5 L153,364 L153.5,362.6 L154,361 L154.5,359.9 L155,358.3 L155.5,357.2 L156,355.5 L156.5,353.5 L157,352 L157.5,350.3 L158,347.7 L158.5,346.5 L159,344.7 L159.5,343 L160,340.9 L160.5,338.6 L161,336.6 L161.5,335.3 L162,333.1 L162.5,331.9 L163,330.1 L163.5,328.8 L164,326.8 L164.5,325.3 L165,324.6 L165.5,323.1 L166,321.7 L166.5,320.8 L167,319.8 L167.5,319.2 L168,318.4 L168.5,317.6 L169,317.8 L169.5,317.4 L170,317.1 L170.5,316.6 L171,316.6 L171.5,317.3 L172,317.8 L172.5,318.1 L173,318.2 L173.5,319.4 L174,320.1 L174.5,320.9 L175,322.2 L175.5,323.2 L176,324.7 L176.5,326.1 L177,327.8 L177.5,328.5 L178,330.5 L178.5,332.5 L179,334 L179.5,335.7 L180,337.7 L180.5,338.7 L181,341.4 L181.5,343.1 L182,344.9 L182.5,346.5 L183,348.6 L183.5,349.9 L184,352.1 L184.5,353.6 L185,356 L185.5,357.5 L186,358.7 L186.5,360.5 L187,361.5 L187.5,363 L188,363.8 L188.5,365.6 L189,366.5 L189.5,367.4 L190,367.5 L190.5,368.9 L191,368.7 L191.5,369.6 L192,369.8 L192.5,369.5 L193,369.9 L193.5,370.3 L194,369.8 L194.5,369.1 L195,369.1 L195.5,368 L196,367.8 L196.5,366.4 L197,365.1 L197.5,364.9 L198,362.8 L198.5,361.7 L199,360.8 L199.5,358.7 L200,357.6 L200.5,356.3 L201,354.4 L201.5,352.4 L202,351 L202.5,349.3 L203,347.2 L203.5,345.4 L204,343.2 L204.5,341.4 L205,340.2 L205.5,338.3 L206,335.5 L206.5,333.9 L207,332.2 L207.5,331.1 L208,328.9 L208.5,327.4 L209,326.5 L209.5,324.5 L210,324 L210.5,322.3 L211,321.7 L211.5,320.6 L212,319.1 L212.5,319 L213,318 L213.5,317.3 L214,316.7 L214.5,317.1 L215,316.9 L215.5,316.6 L216,317.3 L216.5,316.9 L217,317.6 L217.5,317.8 L218,318.7 L218.5,320 L219,320.5 L219.5,321.2 L220,322.4 L220.5,324 L221,325 L221.5,327 L222,327.6 L222.5,330 L223,331.4 L223.5,333.3 L224,334.5 L224.5,336 L225,338 L225.5,340.3 L226,341.5 L226.5,343.5 L227,346 L227.5,348 L228,349.8 L228.5,351.6 L229,353 L229.5,355.1 L230,356.6 L230.5,358 L231,359.4 L231.5,360.5 L232,361.9 L232.5,363.3 L233,364.7 L233.5,365.4 L234,367.2 L234.5,367.7 L235,368.5 L235.5,369.3 L236,369.1 L236.5,370.1 L237,370.4 L237.5,369.8 L238,369.6 L238.5,370.1 L239,369.8 L239.5,369.3 L240,368.4 L240.5,367.9 L241,366.6 L241.5,365.8 L242,364.9 L242.5,364.1 L243,362.2 L243.5,361.7 L244,359.4 L244.5,358.8 L245,356.5 L245.5,355.4 L246,353.7 L246.5,352.1 L247,349.8 L247.5,348.2 L248,346 L248.5,344.7 L249,342.1 L249.5,341 L250,338.8 L250.5,336.5 L251,335.6 L251.5,333.2 L252,331.2 L252.5,329.8 L253,328 L253.5,326.7 L254,325.7 L254.5,324.7 L255,323.1 L255.5,322.2 L256,321.1 L256.5,320.1 L257,318.9 L257.5,318.1 L258,317.4 L258.5,317.4 L259,316.7 L259.5,317.1 L260,316.6 L260.5,317 L261,317.1 L261.5,317.6 L262,317.6 L262.5,318.3 L263,319.4 L263.5,319.8 L264,321.2 L264.5,322.5 L265,323.1 L265.5,325 L266,326 L266.5,327.8 L267,328.9 L267.5,330.7 L268,332.3 L268.5,333.5 L269,335.6 L269.5,337.5 L270,339.2 L270.5,341.2 L271,343.3 L271.5,345.1 L272,347 L272.5,348.1 L273,350.5 L273.5,352.2 L274,354.3 L274.5,355 L275,356.8 L275.5,359.2 L276,360.1 L276.5,361.8 L277,363 L277.5,364.1 L278,365.2 L278.5,366.3 L279,367.7 L279.5,368 L280,368.9 L280.5,368.9 L281,369.8 L281.5,369.9 L282,370.2 L282.5,370.4 L283,369.5 L283.5,370.1 L284,369.4 L284.5,368.5 L285,368.1 L285.5,367 L286,366.2 L286.5,365.9 L287,364.7 L287.5,363.6 L288,361.6 L288.5,360.2 L289,359 L289.5,357.6 L290,356.2 L290.5,354.1 L291,352.8 L291.5,350.9 L292,348.7 L292.5,347.4 L293,344.8 L293.5,343.5 L294,341.2 L294.5,339.2 L295,337.8 L295.5,336 L296,334.4 L296.5,332.4 L297,331.3 L297.5,329.5 L298,327.3 L298.5,325.7 L299,325.3 L299.5,323.5 L300,322 L300.5,320.9 L301,320.5 L301.5,319.1 L302,318.5 L302.5,318.2 L303,317.4 L303.5,317.3 L304,317.4 L304.5,317.1 L305,317 L305.5,317.1 L306,317.1 L306.5,317.8 L307,318.3 L307.5,318.9 L308,319.6 L308.5,320.8 L309,321.2 L309.5,322.9 L310,324.3 L310.5,324.7 L311,326.3 L311.5,328.6 L312,329.2 L312.5,331.6 L313,333 L313.5,334.3 L314,336.6 L314.5,337.8 L315,340.5 L315.5,341.8 L316,344.3 L316.5,346.1 L317,347.2 L317.5,349.3 L318,350.9 L318.5,353.2 L319,354.3 L319.5,355.9 L320,357.6 L320.5,359.8 L321,360.7 L321.5,362.1 L322,363.5 L322.5,364.8 L323,365.7 L323.5,367.2 L324,367.4 L324.5,368.3 L325,369.3 L325.5,369.1 L326,369.4 L326.5,370.3 L327,369.8 L327.5,370.3 L328,370.1 L328.5,369.3 L329,368.9 L329.5,368.1 L330,368.1 L330.5,366.9 L331,365.9 L331.5,364.7 L332,363.6 L332.5,363 L333,360.9 L333.5,359.9 L334,358.5 L334.5,356.8 L335,355.1 L335.5,353.3 L336,351.4 L336.5,350.2 L337,348.4 L337.5,346.3 L338,344.1 L338.5,342.9 L339,340.3 L339.5,338.4 L340,337.1 L340.5,335.5 L341,333.5 L341.5,331.3 L342,330.5 L342.5,328.1 L343,326.8 L343.5,326 L344,324.5 L344.5,323.2 L345,321.4 L345.5,321.1 L346,319.7 L346.5,318.5 L347,318.6 L347.5,318.2 L348,316.9 L348.5,317 L349,317.3 L349.5,316.6 L350,316.7 L350.5,317.4 L351,317.4 L351.5,318.4 L352,318.9 L352.5,319.6 L353,320.3 L353.5,320.7 L354,322.3 L354.5,323.3 L355,324.5 L355.5,325.9 L356,327.1 L356.5,328.5 L357,330.9 L357.5,332 L358,333.4 L358.5,336.1 L359,337.4 L359.5,339.4 L360,340.9 L360.5,342.6 L361,344.6 L361.5,347 L362,348.3 L362.5,350.7 L363,351.9 L363.5,354.2 L364,355.2 L364.5,357.1 L365,358.4 L365.5,359.9 L366,361.6 L366.5,362.8 L367,364.2 L367.5,365 L368,366.1 L368.5,367 L369,368.4 L369.5,368.2 L370,369.1 L370.5,369.9 L371,369.9 L371.5,369.7 L372,370.5 L372.5,369.5 L373,369.3 L373.5,368.8 L374,368.7 L374.5,368.5 L375,367.2 L375.5,366.3 L376,365.8 L376.5,364 L377,362.8 L377.5,362.1 L378,360.2 L378.5,359.1 L379,357.2 L379.5,356.1 L380,354.6 L380.5,352.5 L381,350.5 L381.5,349.1 L382,347.3 L382.5,344.8 L383,343.1 L383.5,341.4 L384,339.7 L384.5,337.6 L385,336.2 L385.5,334 L386,332.9 L386.5,330.7 L387,329 L387.5,327.3 L388,325.8 L388.5,324.6 L389,323.9 L389.5,322.3 L390,321.2 L390.5,320.7 L391,319.9 L391.5,318.9 L392,317.8 L392.5,317.4 L393,317.2 L393.5,316.7 L394,316.7 L394.5,316.5 L395,316.7 L395.5,317.5 L396,317.8 L396.5,318.1 L397,318.8 L397.5,319.7 L398,320.7 L398.5,321.1 L399,323 L399.5,323.8 L400,325 L400.5,327 L401,328.3 L401.5,329.5 L402,330.8 L402.5,332.9 L403,334.6 L403.5,336.4 L404,337.9 L404.5,340.2 L405,341.8 L405.5,344.1 L406,345.8 L406.5,347.4 L407,349.7 L407.5,351.2 L408,352.6 L408.5,354.5 L409,355.9 L409.5,357.9 L410,359.9 L410.5,361.4 L411,362.4 L411.5,363.2 L412,364.5 L412.5,365.5 L413,366.6 L413.5,367.7 L414,367.8 L414.5,368.9 L415,369.3 L415.5,369.9 L416,370.2 L416.5,369.9 L417,370.1 L417.5,369.5 L418,369.4 L418.5,369.2 L419,368 L419.5,367.8 L420,367 L420.5,365.7 L421,364.8 L421.5,364.2 L422,362.5 L422.5,361 L423,359.6 L423.5,358.4 L424,356.7 L424.5,355 L425,353.2 L425.5,351.4 L426,349.9 L426.5,348.1 L427,345.8 L427.5,344.4 L428,342.3 L428.5,341.1 L429,339.2 L429.5,336.6 L430,335.3 L430.5,333.2 L431,331.3 L431.5,330.4 L432,328.9 L432.5,327.2 L433,325.7 L433.5,324.7 L434,323 L434.5,322 L435,320.9 L435.5,320.2 L436,319.4 L436.5,318.1 L437,317.5 L437.5,317.4 L438,317.1 L438.5,316.7 L439,317.2 L439.5,317.2 L440,317.3 L440.5,317.5 L441,318.1 L441.5,318.2 L442,319.5 L442.5,319.7 L443,321.4 L443.5,322.2 L444,323 L444.5,324.2 L445,326 L445.5,327.3 L446,329 L446.5,330 L447,332.5 L447.5,333.7 L448,335.5 L448.5,337.6 L449,339.3 L449.5,341 L450,342.7 L450.5,344.8 L451,346.2 L451.5,348.3 L452,350.6 L452.5,351.7 L453,353.4 L453.5,355.9 L454,357 L454.5,358.8 L455,360.3 L455.5,361.8 L456,362.8 L456.5,364.4 L457,364.8 L457.5,366.6 L458,367 L458.5,368.1 L459,368.4 L459.5,369.4 L460,369.4 L460.5,369.9 L461,369.8 L461.5,370.3 L462,370.2 L462.5,369.3 L463,369.5 L463.5,369.2 L464,367.9 L464.5,367.1 L465,366.9 L465.5,366 L466,364.1 L466.5,363.5 L467,362.4 L467.5,360.3 L468,359.4 L468.5,357.4 L469,356.2 L469.5,354.3 L470,352.5 L470.5,350.4 L471,349.1 L471.5,347.3 L472,345.1 L472.5,342.9" fill="none" stroke="#38dccc" stroke-width="1.5"/>
<path d="M6,92.5 L19,92.5 L24,98.5 L19,104.5 L6,104.5 Z" fill="#b0b010"/><text x="12" y="102" fill="#e8e880" font-size="9" text-anchor="middle">1</text>
<path d="M6,183.5 L19,183.5 L24,189.5 L19,195.5 L6,195.5 Z" fill="#18a818"/><text x="12" y="193" fill="#70e070" font-size="9" text-anchor="middle">3</text>
<path d="M6,273.8 L19,273.8 L24,279.8 L19,285.8 L6,285.8 Z" fill="#9a18a8"/><text x="12" y="283.3" fill="#d070e0" font-size="9" text-anchor="middle">4</text>
<path d="M6,364.5 L19,364.5 L24,370.5 L19,376.5 L6,376.5 Z" fill="#18a0a0"/><text x="12" y="374" fill="#70e0e0" font-size="9" text-anchor="middle">2</text>
<path d="M245.5,31.5 L253.5,31.5 L249.5,36 Z" fill="#e81030"/>
<path d="M460.5,62.5 L466,57.5 L466,67.5 Z" fill="#e8f020"/>
<line x1="466" y1="62.5" x2="472" y2="62.5" stroke="#a0a060" stroke-width="1"/>
</svg><div class="a" style="left:100px;top:235px;width:13px;height:25px;background:#a0a000;border:1px solid #c4c420;border-radius:3px"></div><div class="t" style="left:100px;top:241px;width:13px;text-align:center;color:#d8d850;font-size:9px;letter-spacing:0">1</div>
<div class="t" style="left:120px;top:234.8px;color:#dcdc98;-webkit-text-stroke:0;font-size:10.5px;letter-spacing:-0.6px;padding-top:0;">2 V</div>
<div class="t" style="left:120px;top:245.8px;color:#dcdc98;-webkit-text-stroke:0;font-size:10.5px;letter-spacing:-0.6px;padding-top:0;">+2.50</div>
<div class="a" style="left:166px;top:235px;width:13px;height:25px;background:#10a0a8;border:1px solid #30c0c8;border-radius:3px"></div><div class="t" style="left:166px;top:241px;width:13px;text-align:center;color:#70d0d8;font-size:9px;letter-spacing:0">2</div>
<div class="t" style="left:185px;top:234.8px;color:#90d8d8;-webkit-text-stroke:0;font-size:10.5px;letter-spacing:-0.6px;padding-top:0;">2 V</div>
<div class="t" style="left:185px;top:245.8px;color:#90d8d8;-webkit-text-stroke:0;font-size:10.5px;letter-spacing:-0.6px;padding-top:0;">-3.50</div>
<div class="a" style="left:231px;top:235px;width:13px;height:25px;background:#10a010;border:1px solid #30c030;border-radius:3px"></div><div class="t" style="left:231px;top:241px;width:13px;text-align:center;color:#60d060;font-size:9px;letter-spacing:0">3</div>
<div class="t" style="left:251px;top:234.8px;color:#70d870;-webkit-text-stroke:0;font-size:10.5px;letter-spacing:-0.6px;padding-top:0;">2 V</div>
<div class="t" style="left:251px;top:245.8px;color:#70d870;-webkit-text-stroke:0;font-size:10.5px;letter-spacing:-0.6px;padding-top:0;">+0.50</div>
<div class="a" style="left:297px;top:235px;width:13px;height:25px;background:#9010a0;border:1px solid #b030c0;border-radius:3px"></div><div class="t" style="left:297px;top:241px;width:13px;text-align:center;color:#b850c8;font-size:9px;letter-spacing:0">4</div>
<div class="t" style="left:317px;top:234.8px;color:#a040a8;-webkit-text-stroke:0;font-size:10.5px;letter-spacing:-0.6px;padding-top:0;">2 V</div>
<div class="t" style="left:317px;top:245.8px;color:#a8207a;-webkit-text-stroke:0;font-size:10.5px;letter-spacing:-0.6px;padding-top:0;">-1.50</div>
<div class="a" style="left:364px;top:235px;width:13px;height:25px;background:#606060;border:1px solid #909090;border-radius:3px"></div><div class="t" style="left:364px;top:241px;width:13px;text-align:center;color:#d8d8d8;font-size:9px;letter-spacing:0">H</div>
<div class="t" style="left:384px;top:234.8px;color:#e0e0e0;-webkit-text-stroke:0;font-size:10.5px;letter-spacing:-0.6px;padding-top:0;">100us</div>
<div class="t" style="left:384px;top:245.8px;color:#e0e0e0;-webkit-text-stroke:0;font-size:10.5px;letter-spacing:-0.6px;padding-top:0;">+0ps</div>
<div class="a" style="left:422px;top:235px;width:13px;height:25px;background:#a8a800;border:1px solid #c8c830;border-radius:3px"></div><div class="t" style="left:422px;top:241px;width:13px;text-align:center;color:#f0f070;font-size:9px;letter-spacing:0">T</div>
<svg class="a" style="left:440px;top:233px" width="14" height="16"><path d="M2,13.5 H7.5 V3 H12" fill="none" stroke="#d8d820" stroke-width="1.3"/><path d="M4.5,9 L7.5,6 L10.5,9 Z" fill="#d8d820"/></svg>
<div class="t" style="left:480px;top:234.8px;color:#c8c840;-webkit-text-stroke:0;font-size:10.5px;letter-spacing:-0.6px;padding-top:0;">1.6 V</div>
<div class="t" style="left:442px;top:247.8px;color:#d8d8d8;-webkit-text-stroke:0;font-size:10.5px;letter-spacing:-0.6px;padding-top:0;">Trig'd</div>
<div class="t" style="left:473px;top:247.8px;color:#d8d8d8;-webkit-text-stroke:0;font-size:10.5px;letter-spacing:-0.6px;padding-top:0;">S/R: 10 MSa/s</div><div class="a" style="left:69px;top:231px;width:25px;height:397px;background:#dedede;border-left:1px solid #c8c8c8"></div>
<div class="a" style="left:70px;top:232px;width:23px;height:94px;background:#ececec;border:1px solid #d0d0d0;border-left:none"></div>
<div class="a" style="left:70px;top:326px;width:23px;height:110px;background:#d6d6d6;border:1px solid #c8c8c8;border-left:none"></div>
<div class="t" style="left:80.6px;top:278.8px;font-size:14px;letter-spacing:-0.85px;-webkit-text-stroke:0.35px currentColor;transform:translate(-50%,-50%) rotate(90deg);line-height:14px;color:#1a1a1a">Time Meas</div>
<div class="t" style="left:79.8px;top:380.5px;font-size:14.3px;letter-spacing:-0.8px;-webkit-text-stroke:0.35px currentColor;transform:translate(-50%,-50%) rotate(90deg);line-height:14px;color:#1a1a1a">Vertical Meas</div><div class="a" style="left:4px;top:231px;width:65px;height:396px;background:#e4e4e4;border-left:1px solid #f4f4f4;border-right:1px solid #cfcfcf"></div>
<div class="a" style="left:8px;top:232px;width:61px;height:395px;background:#f4f4f4;border:1px solid #cfcfcf"></div>
<svg class="a" style="left:10px;top:234px" width="57" height="57" viewBox="0 0 57 57"><rect width="57" height="57" fill="#000"/><path d="M4.5,28.6 L5.5,26.1 L6.5,23.6 L7.5,21.2 L8.5,19.0 L9.4,16.8 L10.4,14.9 L11.4,13.2 L12.4,11.8 L13.4,10.6 L14.4,9.7 L15.4,9.2 L16.4,9.0 L17.4,9.1 L18.4,9.6 L19.3,10.4 L20.3,11.4 L21.3,12.8 L22.3,14.5 L23.3,16.3 L24.3,18.4 L25.3,20.7 L26.3,23.0 L27.3,25.5 L28.2,28.0 L29.2,30.5 L30.2,33.0 L31.2,35.3 L32.2,37.6 L33.2,39.7 L34.2,41.5 L35.2,43.2 L36.2,44.6 L37.2,45.6 L38.1,46.4 L39.1,46.9 L40.1,47.0 L41.1,46.8 L42.1,46.3 L43.1,45.4 L44.1,44.2 L45.1,42.8 L46.1,41.1 L47.1,39.2 L48.0,37.0 L49.0,34.8 L50.0,32.4 L51.0,29.9 L52.0,27.4" fill="none" stroke="#e8b440" stroke-width="1.7"/><line x1="5" y1="29" x2="5" y2="56" stroke="#88a8d0" stroke-width="1.2" stroke-dasharray="1.2 2.3"/><line x1="52" y1="29" x2="52" y2="56" stroke="#88a8d0" stroke-width="1.2" stroke-dasharray="1.2 2.3"/><line x1="10" y1="51" x2="47" y2="51" stroke="#88a8d0" stroke-width="1.3"/><path d="M7,51 L11,48 L11,54 Z M50,51 L46,48 L46,54 Z" fill="#88a8d0"/><text x="29" y="49" fill="#a0b0c0" font-size="9" font-weight="bold" text-anchor="middle" font-family="Liberation Sans" letter-spacing="0" style="-webkit-text-stroke:0" xml:space="preserve">T</text></svg>
<svg class="a" style="left:10px;top:293px" width="57" height="57" viewBox="0 0 57 57"><rect width="57" height="57" fill="#000"/><path d="M4.5,28.6 L5.5,26.1 L6.5,23.6 L7.5,21.2 L8.5,19.0 L9.4,16.8 L10.4,14.9 L11.4,13.2 L12.4,11.8 L13.4,10.6 L14.4,9.7 L15.4,9.2 L16.4,9.0 L17.4,9.1 L18.4,9.6 L19.3,10.4 L20.3,11.4 L21.3,12.8 L22.3,14.5 L23.3,16.3 L24.3,18.4 L25.3,20.7 L26.3,23.0 L27.3,25.5 L28.2,28.0 L29.2,30.5 L30.2,33.0 L31.2,35.3 L32.2,37.6 L33.2,39.7 L34.2,41.5 L35.2,43.2 L36.2,44.6 L37.2,45.6 L38.1,46.4 L39.1,46.9 L40.1,47.0 L41.1,46.8 L42.1,46.3 L43.1,45.4 L44.1,44.2 L45.1,42.8 L46.1,41.1 L47.1,39.2 L48.0,37.0 L49.0,34.8 L50.0,32.4 L51.0,29.9 L52.0,27.4" fill="none" stroke="#e8b440" stroke-width="1.7"/><line x1="5" y1="29" x2="5" y2="56" stroke="#88a8d0" stroke-width="1.2" stroke-dasharray="1.2 2.3"/><line x1="52" y1="29" x2="52" y2="56" stroke="#88a8d0" stroke-width="1.2" stroke-dasharray="1.2 2.3"/><line x1="10" y1="51" x2="47" y2="51" stroke="#88a8d0" stroke-width="1.3"/><path d="M7,51 L11,48 L11,54 Z M50,51 L46,48 L46,54 Z" fill="#88a8d0"/><text x="29" y="49" fill="#a0b0c0" font-size="9" font-weight="bold" text-anchor="middle" font-family="Liberation Sans" letter-spacing="0" style="-webkit-text-stroke:0" xml:space="preserve">1 / T</text></svg>
<svg class="a" style="left:10px;top:352px" width="57" height="57" viewBox="0 0 57 57"><rect width="57" height="57" fill="#000"/><path d="M0,45.8 H16.9 L45,10.8 H57" fill="none" stroke="#e8b440" stroke-width="1.7"/><circle cx="19.5" cy="42.5" r="2.6" fill="#88a8d0"/><circle cx="42" cy="14.5" r="2.6" fill="#88a8d0"/><line x1="19.5" y1="46" x2="19.5" y2="57" stroke="#88a8d0" stroke-width="1.2" stroke-dasharray="1.2 2.3"/><line x1="42" y1="18" x2="42" y2="57" stroke="#88a8d0" stroke-width="1.2" stroke-dasharray="1.2 2.3"/><line x1="24.5" y1="51.2" x2="37" y2="51.2" stroke="#88a8d0" stroke-width="1.3"/><path d="M21.5,51.2 L25.5,48.2 L25.5,54.2 Z M40,51.2 L36,48.2 L36,54.2 Z" fill="#88a8d0"/><text x="30.5" y="48" fill="#a0b0c0" font-size="10" font-weight="bold" text-anchor="middle" font-family="Liberation Sans" letter-spacing="0" style="-webkit-text-stroke:0" xml:space="preserve">t</text></svg>
<svg class="a" style="left:10px;top:410px" width="57" height="57" viewBox="0 0 57 57"><rect width="57" height="57" fill="#000"/><path d="M0,11 H11.5 L39.6,46 H57" fill="none" stroke="#e8b440" stroke-width="1.7"/><circle cx="14.4" cy="14.6" r="2.6" fill="#88a8d0"/><circle cx="37" cy="42.75" r="2.6" fill="#88a8d0"/><line x1="14.4" y1="18" x2="14.4" y2="57" stroke="#88a8d0" stroke-width="1.2" stroke-dasharray="1.2 2.3"/><line x1="37" y1="46" x2="37" y2="57" stroke="#88a8d0" stroke-width="1.2" stroke-dasharray="1.2 2.3"/><line x1="19.5" y1="51" x2="32" y2="51" stroke="#88a8d0" stroke-width="1.3"/><path d="M16.5,51 L20.5,48 L20.5,54 Z M35,51 L31,48 L31,54 Z" fill="#88a8d0"/><text x="26" y="48" fill="#a0b0c0" font-size="10" font-weight="bold" text-anchor="middle" font-family="Liberation Sans" letter-spacing="0" style="-webkit-text-stroke:0" xml:space="preserve">t</text></svg>
<svg class="a" style="left:10px;top:469px" width="57" height="57" viewBox="0 0 57 57"><rect width="57" height="57" fill="#000"/><path d="M0,46.5 H12 V11.5 H45 V46.5 H57" fill="none" stroke="#e8b440" stroke-width="1.7"/><circle cx="12" cy="22.2" r="2.6" fill="#88a8d0"/><circle cx="45" cy="22.2" r="2.6" fill="#88a8d0"/><line x1="12" y1="25" x2="12" y2="57" stroke="#88a8d0" stroke-width="1.2" stroke-dasharray="1.2 2.3"/><line x1="45" y1="25" x2="45" y2="57" stroke="#88a8d0" stroke-width="1.2" stroke-dasharray="1.2 2.3"/><line x1="17" y1="49.5" x2="40" y2="49.5" stroke="#88a8d0" stroke-width="1.3"/><path d="M14,49.5 L18,46.5 L18,52.5 Z M43,49.5 L39,46.5 L39,52.5 Z" fill="#88a8d0"/><text x="28.5" y="46" fill="#a0b0c0" font-size="10" font-weight="bold" text-anchor="middle" font-family="Liberation Sans" letter-spacing="0" style="-webkit-text-stroke:0" xml:space="preserve">t</text></svg>
<svg class="a" style="left:10px;top:528px" width="57" height="57" viewBox="0 0 57 57"><rect width="57" height="57" fill="#000"/><path d="M0,9 H12 V44 H45 V9 H57" fill="none" stroke="#e8b440" stroke-width="1.7"/><circle cx="12" cy="33.2" r="2.6" fill="#88a8d0"/><circle cx="45" cy="33.2" r="2.6" fill="#88a8d0"/><line x1="12" y1="46" x2="12" y2="57" stroke="#88a8d0" stroke-width="1.2" stroke-dasharray="1.2 2.3"/><line x1="45" y1="46" x2="45" y2="57" stroke="#88a8d0" stroke-width="1.2" stroke-dasharray="1.2 2.3"/><line x1="17" y1="48.2" x2="40" y2="48.2" stroke="#88a8d0" stroke-width="1.3"/><path d="M14,48.2 L18,45.2 L18,51.2 Z M43,48.2 L39,45.2 L39,51.2 Z" fill="#88a8d0"/><text x="28.5" y="56.5" fill="#a0b0c0" font-size="10" font-weight="bold" text-anchor="middle" font-family="Liberation Sans" letter-spacing="0" style="-webkit-text-stroke:0" xml:space="preserve">t</text></svg>
<svg class="a" style="left:10px;top:587px" width="57" height="39" viewBox="0 0 57 39"><rect width="57" height="39" fill="#000"/><rect x="0" y="20" width="57" height="14" fill="#6a6a6a"/><path d="M6,40 V11 H31 V40 M41,40 V11 H57" fill="none" stroke="#e8b440" stroke-width="1.5"/><circle cx="7" cy="28" r="2.6" fill="#88a8d0"/><circle cx="28" cy="27" r="4" fill="#40b020"/><circle cx="32" cy="28" r="2.4" fill="none" stroke="#88a8d0" stroke-width="1"/></svg>
<svg class="a" style="left:71px;top:603px" width="19" height="19" viewBox="0 0 19 19"><circle cx="9.5" cy="9.5" r="8.3" fill="#e8f4ff" stroke="#3a80c8" stroke-width="1.6"/><path d="M4,9.5 L9,5 V7.5 H14.5 V11.5 H9 V14 Z" fill="#2070c0"/></svg>
<!-- bottom doc tabs -->
<div class="a" style="left:2px;top:627px;width:580px;height:24px;background:#e0e0e0"></div>
<div class="a" style="left:2px;top:629px;width:580px;height:1px;background:#c4c4c4"></div>
<div class="a" style="left:3px;top:627px;width:52px;height:22px;background:#ececec;border:1px solid #cccccc;border-top:none"></div>
<div class="t" style="left:3px;top:633px;width:52px;text-align:center">untitled1</div>
<!-- separator -->
<div class="a" style="left:580px;top:230px;width:2px;height:398px;background:#ececec"></div>
<div class="a" style="left:0px;top:150px;width:1px;height:501px;background:#3a3a3a"></div>
<div class="a" style="left:582px;top:151px;width:4px;height:500px;background:linear-gradient(90deg,#d0d0d0,#a0a0a0,#e8e8e8)"></div>
<!-- right panel -->
<div class="a" style="left:586px;top:151px;width:212px;height:500px;background:#dcdcdc"></div>
<div class="a" style="left:798px;top:150px;width:1px;height:501px;background:#f4f4f4"></div>
<div class="a" style="left:588px;top:152px;width:207px;height:30px;background:#e8e8e8;border-radius:2px"></div>
<div class="a" style="left:691px;top:153px;width:1px;height:27px;background:#dedede"></div>
<div class="t" style="left:588px;top:155.5px;width:103px;text-align:center">Run / Stop</div>
<div class="t" style="left:692px;top:155.5px;width:103px;text-align:center">Single</div>
<div class="t" style="left:588px;top:170px;width:103px;text-align:center">Force Trig.</div>
<div class="t" style="left:692px;top:170px;width:103px;text-align:center">Autoset</div>
<div class="a" style="left:586px;top:182px;width:211px;height:1px;background:#d6d6d6"></div>
<div class="t" style="left:587px;top:208.5px;color:#262626;">Horizontal</div>
<div class="a" style="left:588px;top:223px;width:104px;height:59px;background:#dedede"></div>
<div class="a" style="left:692px;top:223.5px;width:102px;height:13.5px;background:#e8e8e8;border-bottom:1px solid #d8d8d8"></div>
<div class="t" style="left:590px;top:224.0px;color:#262626;">Sample Rate</div>
<div class="t" style="left:692px;top:224.0px;width:100px;text-align:center"><svg width="12" height="11" viewBox="0 0 12 11" style="vertical-align:-1.5px;margin-right:2px"><rect x="0.7" y="0.6" width="6.2" height="9.6" rx="2.8" fill="none" stroke="#303030" stroke-width="1"/><rect x="3" y="2.4" width="1.6" height="2.6" fill="#505050"/><path d="M9.3,2.2 L11,4.4 H7.6 Z M9.3,8.6 L11,6.4 H7.6 Z" fill="#202020"/></svg>10 MSa/s</div>
<svg class="a" style="left:784.5px;top:229.5px" width="6" height="4" viewBox="0 0 6 4"><path d="M0,0 H6 L3,3.3 Z" fill="#202020"/></svg>
<div class="a" style="left:692px;top:238.1px;width:102px;height:13.5px;background:#e8e8e8;border-bottom:1px solid #d8d8d8"></div>
<div class="t" style="left:590px;top:238.6px;color:#262626;">Time Div</div>
<div class="t" style="left:692px;top:238.6px;width:100px;text-align:center"><svg width="12" height="11" viewBox="0 0 12 11" style="vertical-align:-1.5px;margin-right:2px"><rect x="0.7" y="0.6" width="6.2" height="9.6" rx="2.8" fill="none" stroke="#303030" stroke-width="1"/><rect x="3" y="2.4" width="1.6" height="2.6" fill="#505050"/><path d="M9.3,2.2 L11,4.4 H7.6 Z M9.3,8.6 L11,6.4 H7.6 Z" fill="#202020"/></svg>100us</div>
<svg class="a" style="left:784.5px;top:244.1px" width="6" height="4" viewBox="0 0 6 4"><path d="M0,0 H6 L3,3.3 Z" fill="#202020"/></svg>
<div class="a" style="left:692px;top:252.7px;width:102px;height:13.5px;background:#e8e8e8;border-bottom:1px solid #d8d8d8"></div>
<div class="t" style="left:590px;top:253.2px;color:#262626;">Horz. Position</div>
<div class="t" style="left:692px;top:253.2px;width:100px;text-align:center"><svg width="12" height="11" viewBox="0 0 12 11" style="vertical-align:-1.5px;margin-right:2px"><rect x="0.7" y="0.6" width="6.2" height="9.6" rx="2.8" fill="none" stroke="#303030" stroke-width="1"/><rect x="3" y="2.4" width="1.6" height="2.6" fill="#505050"/><path d="M9.3,2.2 L11,4.4 H7.6 Z M9.3,8.6 L11,6.4 H7.6 Z" fill="#202020"/></svg>+0ps</div>
<svg class="a" style="left:784.5px;top:258.7px" width="6" height="4" viewBox="0 0 6 4"><path d="M0,0 H6 L3,3.3 Z" fill="#202020"/></svg>
<div class="a" style="left:692px;top:267.3px;width:102px;height:13.5px;background:#e8e8e8;border-bottom:1px solid #d8d8d8"></div>
<div class="t" style="left:590px;top:267.8px;color:#262626;">Rec. Length</div>
<div class="t" style="left:692px;top:267.8px;width:90px;text-align:center">10 K</div>
<svg class="a" style="left:784.5px;top:273.3px" width="6" height="4" viewBox="0 0 6 4"><path d="M0,0 H6 L3,3.3 Z" fill="#202020"/></svg>
<div class="t" style="left:587px;top:308px;color:#262626;">Trigger</div>
<div class="a" style="left:590px;top:324px;width:204px;height:14px;background:#e8e8e8"></div>
<div class="t" style="left:590px;top:325px;width:194px;text-align:center">Edge</div>
<svg class="a" style="left:784.5px;top:331.0px" width="6" height="4" viewBox="0 0 6 4"><path d="M0,0 H6 L3,3.3 Z" fill="#202020"/></svg>
<div class="a" style="left:590px;top:339px;width:102px;height:75px;background:#dadada"></div>
<div class="a" style="left:692px;top:339.1px;width:102px;height:13.5px;background:#e8e8e8;border-bottom:1px solid #d8d8d8"></div>
<div class="t" style="left:590px;top:339.6px;color:#262626;">Source</div>
<div class="t" style="left:692px;top:339.6px;width:90px;text-align:center">CH 1</div>
<svg class="a" style="left:784.5px;top:345.1px" width="6" height="4" viewBox="0 0 6 4"><path d="M0,0 H6 L3,3.3 Z" fill="#202020"/></svg>
<div class="a" style="left:692px;top:353.7px;width:102px;height:13.5px;background:#e8e8e8;border-bottom:1px solid #d8d8d8"></div>
<div class="t" style="left:692px;top:354.2px;width:100px;text-align:center"><svg width="12" height="11" viewBox="0 0 12 11" style="vertical-align:-1.5px;margin-right:2px"><rect x="0.7" y="0.6" width="6.2" height="9.6" rx="2.8" fill="none" stroke="#303030" stroke-width="1"/><rect x="3" y="2.4" width="1.6" height="2.6" fill="#505050"/><path d="M9.3,2.2 L11,4.4 H7.6 Z M9.3,8.6 L11,6.4 H7.6 Z" fill="#202020"/></svg>1.6V</div>
<div class="a" style="left:692px;top:368.3px;width:102px;height:13.5px;background:#e8e8e8;border-bottom:1px solid #d8d8d8"></div>
<div class="t" style="left:590px;top:368.8px;color:#262626;">Slope</div>
<div class="t" style="left:692px;top:368.8px;width:90px;text-align:center">Rising</div>
<svg class="a" style="left:784.5px;top:374.3px" width="6" height="4" viewBox="0 0 6 4"><path d="M0,0 H6 L3,3.3 Z" fill="#202020"/></svg>
<div class="a" style="left:692px;top:382.9px;width:102px;height:13.5px;background:#e8e8e8;border-bottom:1px solid #d8d8d8"></div>
<div class="t" style="left:590px;top:383.4px;color:#262626;">Mode</div>
<div class="t" style="left:692px;top:383.4px;width:90px;text-align:center">Auto</div>
<svg class="a" style="left:784.5px;top:388.9px" width="6" height="4" viewBox="0 0 6 4"><path d="M0,0 H6 L3,3.3 Z" fill="#202020"/></svg>
<div class="a" style="left:692px;top:397.5px;width:102px;height:14px;background:#e8e8e8"></div>
<svg class="a" style="left:704px;top:399.5px" width="10" height="10" viewBox="0 0 10 10"><rect x="1" y="1" width="1.8" height="1.8" fill="#3070b0"/><rect x="1" y="4" width="1.8" height="1.8" fill="#3070b0"/><rect x="1" y="7" width="1.8" height="1.8" fill="#3070b0"/><rect x="4" y="1" width="1.8" height="1.8" fill="#3070b0"/><rect x="4" y="4" width="1.8" height="1.8" fill="#3070b0"/><rect x="4" y="7" width="1.8" height="1.8" fill="#3070b0"/><rect x="7" y="1" width="1.8" height="1.8" fill="#3070b0"/><rect x="7" y="4" width="1.8" height="1.8" fill="#3070b0"/><rect x="7" y="7" width="1.8" height="1.8" fill="#3070b0"/></svg>
<div class="t" style="left:716px;top:398.0px;color:#262626;">Adv. Settings...</div>
<div class="a" style="left:590px;top:412.0px;width:204px;height:1px;background:#d0d0d0"></div>
<div class="a" style="left:612px;top:447.0px;width:53px;height:15px;background:#e6e6e6;border-radius:2px"></div>
<div class="t" style="left:612px;top:448.5px;width:53px;text-align:center">Digital</div>
<div class="a" style="left:612px;top:463.5px;width:53px;height:15px;background:#e6e6e6;border-radius:2px"></div>
<div class="t" style="left:612px;top:465.0px;width:53px;text-align:center">Math</div>
<div class="a" style="left:612px;top:480.0px;width:53px;height:15px;background:#e6e6e6;border-radius:2px"></div>
<div class="t" style="left:612px;top:481.5px;width:53px;text-align:center">FFT</div>
<div class="a" style="left:612px;top:496.5px;width:53px;height:15px;background:#e6e6e6;border-radius:2px"></div>
<div class="t" style="left:612px;top:498.0px;width:53px;text-align:center">Decode</div>
<div class="a" style="left:705px;top:438px;width:92px;height:212px;background:#e2e2e2"></div>
<div class="a" style="left:706px;top:441px;width:44px;height:25px;background:#a0a0a0;border-radius:3px"></div>
<div class="a" style="left:710px;top:444.0px;width:19px;height:20px;background:#f8f800;border:1px solid #303030"></div>
<div class="t" style="left:710px;top:445.5px;width:19px;text-align:center;font-size:17px;line-height:17px;font-weight:bold;letter-spacing:-0.5px;color:#101010;-webkit-text-stroke:0;padding-top:0">1</div>
<div class="t" style="left:736px;top:445.0px;font-size:8px;line-height:8px;letter-spacing:-0.2px;color:#c0c0c0">BW</div>
<div class="t" style="left:736px;top:455.0px;font-size:8px;line-height:8px;letter-spacing:-0.2px;color:#f0a070">DC</div>
<div class="a" style="left:754px;top:444.0px;width:19px;height:20px;background:#10e8f0;border:1px solid #303030"></div>
<div class="t" style="left:754px;top:445.5px;width:19px;text-align:center;font-size:17px;line-height:17px;font-weight:bold;letter-spacing:-0.5px;color:#101010;-webkit-text-stroke:0;padding-top:0">2</div>
<div class="t" style="left:780px;top:445.0px;font-size:8px;line-height:8px;letter-spacing:-0.2px;color:#c8c8c8">BW</div>
<div class="t" style="left:780px;top:455.0px;font-size:8px;line-height:8px;letter-spacing:-0.2px;color:#f0a070">DC</div>
<div class="a" style="left:710px;top:469.9px;width:19px;height:20px;background:#10d010;border:1px solid #303030"></div>
<div class="t" style="left:710px;top:471.4px;width:19px;text-align:center;font-size:17px;line-height:17px;font-weight:bold;letter-spacing:-0.5px;color:#101010;-webkit-text-stroke:0;padding-top:0">3</div>
<div class="t" style="left:736px;top:470.9px;font-size:8px;line-height:8px;letter-spacing:-0.2px;color:#c8c8c8">BW</div>
<div class="t" style="left:736px;top:480.9px;font-size:8px;line-height:8px;letter-spacing:-0.2px;color:#f0a070">DC</div>
<div class="a" style="left:754px;top:469.9px;width:19px;height:20px;background:#e810e8;border:1px solid #303030"></div>
<div class="t" style="left:754px;top:471.4px;width:19px;text-align:center;font-size:17px;line-height:17px;font-weight:bold;letter-spacing:-0.5px;color:#101010;-webkit-text-stroke:0;padding-top:0">4</div>
<div class="t" style="left:780px;top:470.9px;font-size:8px;line-height:8px;letter-spacing:-0.2px;color:#c8c8c8">BW</div>
<div class="t" style="left:780px;top:480.9px;font-size:8px;line-height:8px;letter-spacing:-0.2px;color:#f0a070">DC</div>
<div class="a" style="left:710px;top:495.8px;width:19px;height:20px;background:#a8a8a8;border:1px solid #666666;box-shadow:0 0 0 1px #f2f2f2"></div>
<div class="t" style="left:710px;top:498.3px;width:19px;text-align:center;font-size:17px;line-height:17px;font-weight:bold;letter-spacing:0;color:#444444;-webkit-text-stroke:0;padding-top:0">5</div>
<div class="t" style="left:736px;top:496.8px;font-size:8px;line-height:8px;letter-spacing:-0.2px;color:#dadada">BW</div>
<div class="t" style="left:736px;top:506.8px;font-size:8px;line-height:8px;letter-spacing:-0.2px;color:#d0d0d0">DC</div>
<div class="a" style="left:754px;top:495.8px;width:19px;height:20px;background:#a8a8a8;border:1px solid #666666;box-shadow:0 0 0 1px #f2f2f2"></div>
<div class="t" style="left:754px;top:498.3px;width:19px;text-align:center;font-size:17px;line-height:17px;font-weight:bold;letter-spacing:0;color:#444444;-webkit-text-stroke:0;padding-top:0">6</div>
<div class="t" style="left:780px;top:496.8px;font-size:8px;line-height:8px;letter-spacing:-0.2px;color:#dadada">BW</div>
<div class="t" style="left:780px;top:506.8px;font-size:8px;line-height:8px;letter-spacing:-0.2px;color:#d0d0d0">DC</div>
<div class="a" style="left:710px;top:521.7px;width:19px;height:20px;background:#a8a8a8;border:1px solid #666666;box-shadow:0 0 0 1px #f2f2f2"></div>
<div class="t" style="left:710px;top:524.2px;width:19px;text-align:center;font-size:17px;line-height:17px;font-weight:bold;letter-spacing:0;color:#444444;-webkit-text-stroke:0;padding-top:0">7</div>
<div class="t" style="left:736px;top:522.7px;font-size:8px;line-height:8px;letter-spacing:-0.2px;color:#dadada">BW</div>
<div class="t" style="left:736px;top:532.7px;font-size:8px;line-height:8px;letter-spacing:-0.2px;color:#d0d0d0">DC</div>
<div class="a" style="left:754px;top:521.7px;width:19px;height:20px;background:#a8a8a8;border:1px solid #666666;box-shadow:0 0 0 1px #f2f2f2"></div>
<div class="t" style="left:754px;top:524.2px;width:19px;text-align:center;font-size:17px;line-height:17px;font-weight:bold;letter-spacing:0;color:#444444;-webkit-text-stroke:0;padding-top:0">8</div>
<div class="t" style="left:780px;top:522.7px;font-size:8px;line-height:8px;letter-spacing:-0.2px;color:#dadada">BW</div>
<div class="t" style="left:780px;top:532.7px;font-size:8px;line-height:8px;letter-spacing:-0.2px;color:#d0d0d0">DC</div>
<div class="a" style="left:710px;top:547.6px;width:19px;height:20px;background:#a8a8a8;border:1px solid #666666;box-shadow:0 0 0 1px #f2f2f2"></div>
<div class="t" style="left:710px;top:550.1px;width:19px;text-align:center;font-size:17px;line-height:17px;font-weight:bold;letter-spacing:0;color:#444444;-webkit-text-stroke:0;padding-top:0">9</div>
<div class="t" style="left:736px;top:548.6px;font-size:8px;line-height:8px;letter-spacing:-0.2px;color:#dadada">BW</div>
<div class="t" style="left:736px;top:558.6px;font-size:8px;line-height:8px;letter-spacing:-0.2px;color:#d0d0d0">DC</div>
<div class="a" style="left:754px;top:547.6px;width:19px;height:20px;background:#a8a8a8;border:1px solid #666666;box-shadow:0 0 0 1px #f2f2f2"></div>
<div class="t" style="left:754px;top:550.1px;width:19px;text-align:center;font-size:17px;line-height:17px;font-weight:bold;letter-spacing:-1.6px;color:#444444;-webkit-text-stroke:0;padding-top:0">10</div>
<div class="t" style="left:780px;top:548.6px;font-size:8px;line-height:8px;letter-spacing:-0.2px;color:#dadada">BW</div>
<div class="t" style="left:780px;top:558.6px;font-size:8px;line-height:8px;letter-spacing:-0.2px;color:#d0d0d0">DC</div>
<div class="a" style="left:710px;top:573.5px;width:19px;height:20px;background:#a8a8a8;border:1px solid #666666;box-shadow:0 0 0 1px #f2f2f2"></div>
<div class="t" style="left:710px;top:576.0px;width:19px;text-align:center;font-size:17px;line-height:17px;font-weight:bold;letter-spacing:-1.6px;color:#444444;-webkit-text-stroke:0;padding-top:0">11</div>
<div class="t" style="left:736px;top:574.5px;font-size:8px;line-height:8px;letter-spacing:-0.2px;color:#dadada">BW</div>
<div class="t" style="left:736px;top:584.5px;font-size:8px;line-height:8px;letter-spacing:-0.2px;color:#d0d0d0">DC</div>
<div class="a" style="left:754px;top:573.5px;width:19px;height:20px;background:#a8a8a8;border:1px solid #666666;box-shadow:0 0 0 1px #f2f2f2"></div>
<div class="t" style="left:754px;top:576.0px;width:19px;text-align:center;font-size:17px;line-height:17px;font-weight:bold;letter-spacing:-1.6px;color:#444444;-webkit-text-stroke:0;padding-top:0">12</div>
<div class="t" style="left:780px;top:574.5px;font-size:8px;line-height:8px;letter-spacing:-0.2px;color:#dadada">BW</div>
<div class="t" style="left:780px;top:584.5px;font-size:8px;line-height:8px;letter-spacing:-0.2px;color:#d0d0d0">DC</div>
<div class="a" style="left:710px;top:599.4px;width:19px;height:20px;background:#a8a8a8;border:1px solid #666666;box-shadow:0 0 0 1px #f2f2f2"></div>
<div class="t" style="left:710px;top:601.9px;width:19px;text-align:center;font-size:17px;line-height:17px;font-weight:bold;letter-spacing:-1.6px;color:#444444;-webkit-text-stroke:0;padding-top:0">13</div>
<div class="t" style="left:736px;top:600.4px;font-size:8px;line-height:8px;letter-spacing:-0.2px;color:#dadada">BW</div>
<div class="t" style="left:736px;top:610.4px;font-size:8px;line-height:8px;letter-spacing:-0.2px;color:#d0d0d0">DC</div>
<div class="a" style="left:754px;top:599.4px;width:19px;height:20px;background:#a8a8a8;border:1px solid #666666;box-shadow:0 0 0 1px #f2f2f2"></div>
<div class="t" style="left:754px;top:601.9px;width:19px;text-align:center;font-size:17px;line-height:17px;font-weight:bold;letter-spacing:-1.6px;color:#444444;-webkit-text-stroke:0;padding-top:0">14</div>
<div class="t" style="left:780px;top:600.4px;font-size:8px;line-height:8px;letter-spacing:-0.2px;color:#dadada">BW</div>
<div class="t" style="left:780px;top:610.4px;font-size:8px;line-height:8px;letter-spacing:-0.2px;color:#d0d0d0">DC</div>
<div class="a" style="left:710px;top:625.3px;width:19px;height:20px;background:#a8a8a8;border:1px solid #666666;box-shadow:0 0 0 1px #f2f2f2"></div>
<div class="t" style="left:710px;top:627.8px;width:19px;text-align:center;font-size:17px;line-height:17px;font-weight:bold;letter-spacing:-1.6px;color:#444444;-webkit-text-stroke:0;padding-top:0">15</div>
<div class="t" style="left:736px;top:626.3px;font-size:8px;line-height:8px;letter-spacing:-0.2px;color:#dadada">BW</div>
<div class="t" style="left:736px;top:636.3px;font-size:8px;line-height:8px;letter-spacing:-0.2px;color:#d0d0d0">DC</div>
<div class="a" style="left:754px;top:625.3px;width:19px;height:20px;background:#a8a8a8;border:1px solid #666666;box-shadow:0 0 0 1px #f2f2f2"></div>
<div class="t" style="left:754px;top:627.8px;width:19px;text-align:center;font-size:17px;line-height:17px;font-weight:bold;letter-spacing:-1.6px;color:#444444;-webkit-text-stroke:0;padding-top:0">16</div>
<div class="t" style="left:780px;top:626.3px;font-size:8px;line-height:8px;letter-spacing:-0.2px;color:#dadada">BW</div>
<div class="t" style="left:780px;top:636.3px;font-size:8px;line-height:8px;letter-spacing:-0.2px;color:#d0d0d0">DC</div>
<svg class="a" style="left:614px;top:588px" width="21" height="21" viewBox="0 0 21 21"><rect x="0" y="0" width="21" height="21" fill="#fafafa"/><rect x="1" y="1" width="19" height="19" fill="#000"/><path d="M1,5 L3,3 L5,5 L7,3 L9,5 L11,3 L13,5 L15,3 L17,5 L19,3" stroke="#e0e020" fill="none" stroke-width="1"/><path d="M1,9 H20" stroke="#4080c0" stroke-width="0.8"/><path d="M1,13 L3,11 L5,13 L7,11 L9,13 L11,11 L13,13 L15,11 L17,13 L19,11" stroke="#20c020" fill="none" stroke-width="1"/><path d="M1,17.5 H20" stroke="#c020c0" stroke-width="1.2"/></svg>
<svg class="a" style="left:642px;top:588px" width="21" height="21" viewBox="0 0 21 21"><rect x="0" y="0" width="21" height="21" fill="#fafafa"/><rect x="1" y="1" width="19" height="19" fill="#000"/><path d="M10.5,1 V20" stroke="#c0c0c0" stroke-width="0.8"/><path d="M2,12 L4,10 L6,12 L8,10" stroke="#20c020" fill="none" stroke-width="1"/><path d="M12,10 H19" stroke="#c02080" stroke-width="0.8"/></svg>
<svg class="a" style="left:614px;top:617px" width="21" height="21" viewBox="0 0 21 21"><rect x="0" y="0" width="21" height="21" fill="#fafafa"/><rect x="1" y="1" width="19" height="19" fill="#000"/><path d="M1,6 L3,4 L5,6 L7,4 L9,6 L11,4 L13,6 L15,4 L17,6 L19,4" stroke="#e0e020" fill="none" stroke-width="1"/><path d="M1,10.5 H20" stroke="#c0c0c0" stroke-width="0.8"/><path d="M2,15 H19" stroke="#208080" stroke-width="1" stroke-dasharray="1 1"/></svg>
<svg class="a" style="left:642px;top:617px" width="21" height="21" viewBox="0 0 21 21"><rect x="0" y="0" width="21" height="21" fill="#fafafa"/><rect x="1" y="1" width="19" height="19" fill="#000"/><path d="M10.5,1 V20 M1,10.5 H20" stroke="#c0c0c0" stroke-width="0.8"/><path d="M2,6 L4,4 L6,6 L8,4" stroke="#e0e020" fill="none" stroke-width="1"/><path d="M2,15 L4,13 L6,15 L8,13" stroke="#20c020" fill="none" stroke-width="1"/><path d="M12,5 H19" stroke="#20a0c0" stroke-width="0.8"/><path d="M12,16 H19" stroke="#c020c0" stroke-width="1"/></svg>
</body></html>
